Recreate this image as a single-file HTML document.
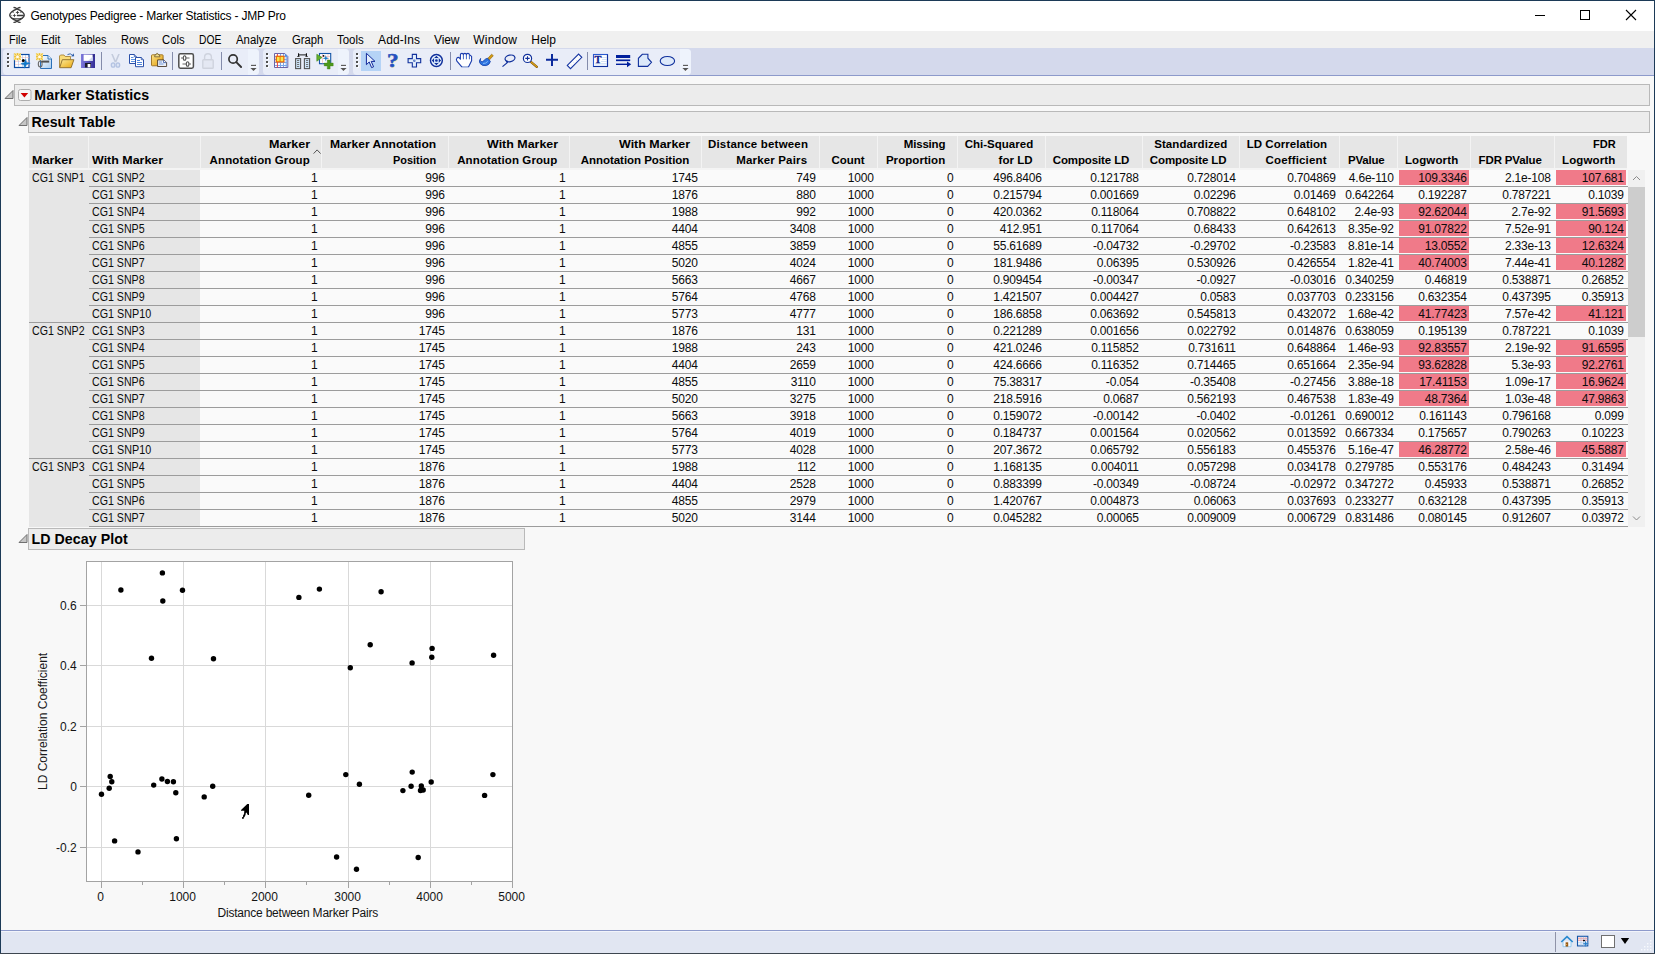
<!DOCTYPE html>
<html><head><meta charset="utf-8"><title>Genotypes Pedigree - Marker Statistics - JMP Pro</title>
<style>
html,body{margin:0;padding:0;background:#1c3a57;}
#w{position:relative;width:1655px;height:954px;overflow:hidden;font-family:"Liberation Sans",sans-serif;}
.r{position:absolute;display:block;}
.t{position:absolute;white-space:pre;}
</style></head>
<body><div id="w">
<div class="r" style="left:0px;top:0px;width:1655px;height:954px;background:#1c3a57;"></div>
<div class="r" style="left:1px;top:1px;width:1653px;height:30px;background:#ffffff;"></div>
<div class="r" style="left:1px;top:31px;width:1653px;height:17px;background:#f0f0f0;"></div>
<div class="r" style="left:1px;top:48px;width:1653px;height:27px;background:#d4d9ec;"></div>
<div class="r" style="left:1px;top:75px;width:1653px;height:1px;background:#8d9acb;"></div>
<div class="r" style="left:1px;top:76px;width:1653px;height:854px;background:#f8f8f8;"></div>
<div class="r" style="left:1px;top:930px;width:1653px;height:1px;background:#8d9acb;"></div>
<div class="r" style="left:1px;top:931px;width:1653px;height:1px;background:#f2f4fa;"></div>
<div class="r" style="left:1px;top:932px;width:1653px;height:21px;background:#e1e6f2;"></div>
<div class="r" style="left:0px;top:953px;width:1655px;height:1px;background:#3d4650;"></div>
<svg class="r" style="left:0;top:0" width="40" height="31" viewBox="0 0 40 31"><g fill="none" stroke="#3a3a3a" stroke-width="1.3" stroke-linecap="round"><path d="M14 7.5q1.8 0 3 1.4q7 3 7.300000000000001 6.199999999999999q-0.3 3.1-7.300000000000001 5.9q-1.2 1.4-3 1.4"/><path d="M20 7.5q-1.8 0-3 1.4q-7 3-7.300000000000001 6.199999999999999q0.3 3.1 7.300000000000001 5.9q1.2 1.4 3 1.4"/><path d="M12 18.3q5 1.3 10 0"/><path d="M17.4 15.5h5.8"/></g><path d="M17.5 10.4L18.1 11.8L19.5 12.4L18.1 13.0L17.5 14.4L16.9 13.0L15.5 12.4L16.9 11.8Z" fill="#3a3a3a"/><path d="M14.4 13.5L15.0 14.9L16.4 15.5L15.0 16.1L14.4 17.5L13.8 16.1L12.4 15.5L13.8 14.9Z" fill="#3a3a3a"/><path d="M11.6 12.6l2.4-1.2v1.2zM22.4 12.6l-2.4-1.2v1.2zM10.4 15.5l1.2-0.5v1z" fill="#3a3a3a"/></svg>
<span class="t" style="left:30.40px;top:8.04px;font-size:12px;line-height:16px;color:#000;letter-spacing:-0.205px;">Genotypes Pedigree - Marker Statistics - JMP Pro</span>
<svg class="r" style="left:1520px;top:1px" width="134" height="30" viewBox="0 0 134 30"><g stroke="#000" stroke-width="1" fill="none"><path d="M15 14.5h10"/><rect x="60.5" y="9.5" width="9" height="9"/><path d="M106 9l10 10M116 9l-10 10" stroke-width="1.1"/></g></svg>
<span class="t" style="left:8.80px;top:31.64px;font-size:12px;line-height:16px;color:#000;transform-origin:0 0;transform:scaleX(0.9051);">File</span>
<span class="t" style="left:40.50px;top:31.64px;font-size:12px;line-height:16px;color:#000;transform-origin:0 0;transform:scaleX(0.9334);">Edit</span>
<span class="t" style="left:74.50px;top:31.64px;font-size:12px;line-height:16px;color:#000;transform-origin:0 0;transform:scaleX(0.9052);">Tables</span>
<span class="t" style="left:120.60px;top:31.64px;font-size:12px;line-height:16px;color:#000;transform-origin:0 0;transform:scaleX(0.9198);">Rows</span>
<span class="t" style="left:162.30px;top:31.64px;font-size:12px;line-height:16px;color:#000;transform-origin:0 0;transform:scaleX(0.9414);">Cols</span>
<span class="t" style="left:199.40px;top:31.64px;font-size:12px;line-height:16px;color:#000;transform-origin:0 0;transform:scaleX(0.8576);">DOE</span>
<span class="t" style="left:236.40px;top:31.64px;font-size:12px;line-height:16px;color:#000;transform-origin:0 0;transform:scaleX(0.9487);">Analyze</span>
<span class="t" style="left:291.50px;top:31.64px;font-size:12px;line-height:16px;color:#000;transform-origin:0 0;transform:scaleX(0.9385);">Graph</span>
<span class="t" style="left:337.40px;top:31.64px;font-size:12px;line-height:16px;color:#000;transform-origin:0 0;transform:scaleX(0.9531);">Tools</span>
<span class="t" style="left:378.10px;top:31.64px;font-size:12px;line-height:16px;color:#000;letter-spacing:0.106px;">Add-Ins</span>
<span class="t" style="left:434.10px;top:31.64px;font-size:12px;line-height:16px;color:#000;letter-spacing:-0.198px;">View</span>
<span class="t" style="left:473.30px;top:31.64px;font-size:12px;line-height:16px;color:#000;letter-spacing:0.187px;">Window</span>
<span class="t" style="left:531.30px;top:31.64px;font-size:12px;line-height:16px;color:#000;letter-spacing:-0.020px;">Help</span>
<div class="r" style="left:3px;top:49px;width:256px;height:26px;background:#e9edf8;border-radius:4px;"></div>
<div class="r" style="left:8px;top:54px;width:2px;height:2px;background:#fbfcff;"></div>
<div class="r" style="left:7px;top:53px;width:2px;height:2px;background:#505050;"></div>
<div class="r" style="left:8px;top:58px;width:2px;height:2px;background:#fbfcff;"></div>
<div class="r" style="left:7px;top:57px;width:2px;height:2px;background:#505050;"></div>
<div class="r" style="left:8px;top:62px;width:2px;height:2px;background:#fbfcff;"></div>
<div class="r" style="left:7px;top:61px;width:2px;height:2px;background:#505050;"></div>
<div class="r" style="left:8px;top:66px;width:2px;height:2px;background:#fbfcff;"></div>
<div class="r" style="left:7px;top:65px;width:2px;height:2px;background:#505050;"></div>
<div class="r" style="left:263px;top:49px;width:86px;height:26px;background:#e9edf8;border-radius:4px;"></div>
<div class="r" style="left:267px;top:54px;width:2px;height:2px;background:#fbfcff;"></div>
<div class="r" style="left:266px;top:53px;width:2px;height:2px;background:#505050;"></div>
<div class="r" style="left:267px;top:58px;width:2px;height:2px;background:#fbfcff;"></div>
<div class="r" style="left:266px;top:57px;width:2px;height:2px;background:#505050;"></div>
<div class="r" style="left:267px;top:62px;width:2px;height:2px;background:#fbfcff;"></div>
<div class="r" style="left:266px;top:61px;width:2px;height:2px;background:#505050;"></div>
<div class="r" style="left:267px;top:66px;width:2px;height:2px;background:#fbfcff;"></div>
<div class="r" style="left:266px;top:65px;width:2px;height:2px;background:#505050;"></div>
<div class="r" style="left:353px;top:49px;width:338px;height:26px;background:#e9edf8;border-radius:4px;"></div>
<div class="r" style="left:357px;top:54px;width:2px;height:2px;background:#fbfcff;"></div>
<div class="r" style="left:356px;top:53px;width:2px;height:2px;background:#505050;"></div>
<div class="r" style="left:357px;top:58px;width:2px;height:2px;background:#fbfcff;"></div>
<div class="r" style="left:356px;top:57px;width:2px;height:2px;background:#505050;"></div>
<div class="r" style="left:357px;top:62px;width:2px;height:2px;background:#fbfcff;"></div>
<div class="r" style="left:356px;top:61px;width:2px;height:2px;background:#505050;"></div>
<div class="r" style="left:357px;top:66px;width:2px;height:2px;background:#fbfcff;"></div>
<div class="r" style="left:356px;top:65px;width:2px;height:2px;background:#505050;"></div>
<div class="r" style="left:248px;top:49px;width:11px;height:26px;background:#eef3fc;border-radius:0 4px 4px 0;"></div>
<div class="r" style="left:338px;top:49px;width:11px;height:26px;background:#eef3fc;border-radius:0 4px 4px 0;"></div>
<div class="r" style="left:680px;top:49px;width:11px;height:26px;background:#eef3fc;border-radius:0 4px 4px 0;"></div>
<svg class="r" style="left:250.0px;top:64px" width="8" height="8" viewBox="0 0 8 8"><path d="M1 1.4h5" stroke="#fafbff" stroke-width="1" fill="none" transform="translate(0.6 0.8)"/><path d="M1 1.4h5" stroke="#555" stroke-width="1.1" fill="none"/><path d="M0.4 4.1h6.2l-3.1 3z" fill="#fafbff" transform="translate(0.6 0.7)"/><path d="M0.4 4.1h6.2l-3.1 3z" fill="#555"/></svg>
<svg class="r" style="left:340.3px;top:64px" width="8" height="8" viewBox="0 0 8 8"><path d="M1 1.4h5" stroke="#fafbff" stroke-width="1" fill="none" transform="translate(0.6 0.8)"/><path d="M1 1.4h5" stroke="#555" stroke-width="1.1" fill="none"/><path d="M0.4 4.1h6.2l-3.1 3z" fill="#fafbff" transform="translate(0.6 0.7)"/><path d="M0.4 4.1h6.2l-3.1 3z" fill="#555"/></svg>
<svg class="r" style="left:681.8px;top:64px" width="8" height="8" viewBox="0 0 8 8"><path d="M1 1.4h5" stroke="#fafbff" stroke-width="1" fill="none" transform="translate(0.6 0.8)"/><path d="M1 1.4h5" stroke="#555" stroke-width="1.1" fill="none"/><path d="M0.4 4.1h6.2l-3.1 3z" fill="#fafbff" transform="translate(0.6 0.7)"/><path d="M0.4 4.1h6.2l-3.1 3z" fill="#555"/></svg>
<div class="r" style="left:101px;top:52px;width:1px;height:18px;background:#848cab;"></div>
<div class="r" style="left:172px;top:52px;width:1px;height:18px;background:#848cab;"></div>
<div class="r" style="left:221px;top:52px;width:1px;height:18px;background:#848cab;"></div>
<div class="r" style="left:450px;top:52px;width:1px;height:18px;background:#848cab;"></div>
<div class="r" style="left:587px;top:52px;width:1px;height:18px;background:#848cab;"></div>
<div class="r" style="left:361px;top:51px;width:20px;height:20px;background:#b5d3f6;"></div>
<svg class="r" style="left:0;top:48px" width="700" height="28" viewBox="0 48 700 28"><rect x="14.5" y="54.5" width="14.5" height="13" fill="#ffffff" stroke="#0c4ca3" stroke-width="1.2"/><path d="M15 57.5h14M15 61.5h14M15 64.5h14" stroke="#f6b0b0" stroke-width="0.5"/><path d="M18.5 55v12M22.5 55v12M25.5 55v12" stroke="#9fc0ea" stroke-width="0.6"/><rect x="14.0" y="53.2" width="7" height="7" fill="#f9e38a"/><path d="M14.3 53.5l6.4 6.4M20.7 53.5l-6.4 6.4M17.5 53.2v7M14.0 56.7h7" stroke="#e3ad22" stroke-width="0.8" fill="none"/><circle cx="17.5" cy="56.7" r="1.5" fill="#fffdf0"/><circle cx="23.3" cy="60.4" r="1.5" fill="#000"/><path d="M25.8 59.3L26.5 62.5L30.2 63.3L26.6 64.5L24.5 68.2L24 64.8L20.8 63.8L24.4 62.6Z" fill="#1178c8" stroke="#1178c8" stroke-width="0.5"/><defs><linearGradient id="gpg" x1="0" y1="0" x2="1" y2="1"><stop offset="0" stop-color="#ffffff"/><stop offset="1" stop-color="#a9cdf0"/></linearGradient></defs><path d="M40.5 55.5h7.5l3.5 3.5v9.5h-11z" fill="url(#gpg)" stroke="#2a70b8" stroke-width="1"/><path d="M48 55.5v3.5h3.5" fill="#e8f2fc" stroke="#2a70b8" stroke-width="0.9"/><rect x="36.0" y="53.2" width="7" height="7" fill="#f9e38a"/><path d="M36.3 53.5l6.4 6.4M42.7 53.5l-6.4 6.4M39.5 53.2v7M36.0 56.7h7" stroke="#e3ad22" stroke-width="0.8" fill="none"/><circle cx="39.5" cy="56.7" r="1.5" fill="#fffdf0"/><ellipse cx="40.2" cy="64" rx="1.9" ry="3" fill="none" stroke="#6a6a6a" stroke-width="1.1"/><path d="M41.4 61.6h7.8" stroke="#505050" stroke-width="2"/><defs><linearGradient id="gfo" x1="0" y1="0" x2="1" y2="1"><stop offset="0" stop-color="#fdeb9a"/><stop offset="1" stop-color="#e9a70e"/></linearGradient></defs><path d="M59.5 67.5v-11.5l1-1h3.5l1.2 1.5h5.3v3" fill="#f9dc7a" stroke="#a8843a" stroke-width="0.9"/><path d="M59.7 67.7l2.6-8h11.6l-2.8 8z" fill="url(#gfo)" stroke="#8a6a2a" stroke-width="0.9"/><path d="M67.5 54.6q3-2 5 0.8" fill="none" stroke="#3a6ab0" stroke-width="1"/><path d="M71.2 56.6l3-0.3l-0.6-3z" fill="#2a5aa8"/><defs><linearGradient id="gsv" x1="0" y1="0" x2="1" y2="0"><stop offset="0" stop-color="#7d78dc"/><stop offset="1" stop-color="#342e96"/></linearGradient></defs><rect x="81" y="54" width="14" height="14" fill="url(#gsv)"/><rect x="83.6" y="54.6" width="9" height="6.3" fill="#ffffff"/><path d="M88 60.9l4.6-4.5v4.5z" fill="#cfd8f0"/><rect x="85" y="63" width="6" height="4.4" fill="#1a1a2a"/><rect x="87.6" y="64" width="2.8" height="3.4" fill="#ffffff"/><rect x="93.3" y="55.5" width="0.9" height="0.9" fill="#1a1a4a"/><path d="M111.2 54l1.6 0l2.7 6.2l2.7-6.2l1.6 0l-3.4 8.2l-1.8 0z" fill="#c3cbdc"/><g fill="#dbe4f4" stroke="#b4c3e2" stroke-width="1.3"><ellipse cx="113.1" cy="65" rx="1.8" ry="2.2"/><ellipse cx="117.9" cy="65" rx="1.8" ry="2.2"/></g><path d="M129.5 54.5h4.8l2.2 2.2v6.8h-7z" fill="#ffffff" stroke="#2a4fa8" stroke-width="1"/><path d="M134.3 54.5v2.2h2.2" fill="#dfe8fa" stroke="#2a4fa8" stroke-width="0.8"/><path d="M131 57.5h2.5M131 59.5h4.5M131 61.5h4.5" stroke="#4a86e0" stroke-width="0.9"/><path d="M135.5 57.5h5.8l2.2 2.2v6.999999999999999h-8z" fill="#ffffff" stroke="#2a4fa8" stroke-width="1"/><path d="M141.3 57.5v2.2h2.2" fill="#dfe8fa" stroke="#2a4fa8" stroke-width="0.8"/><path d="M137 60.5h3M137 62.5h5M137 64.5h5" stroke="#3a76d8" stroke-width="0.9"/><defs><linearGradient id="gpa" x1="0" y1="0" x2="1" y2="1"><stop offset="0" stop-color="#fbe38a"/><stop offset="1" stop-color="#e19a06"/></linearGradient></defs><rect x="151.5" y="54.8" width="11.6" height="11" rx="0.8" fill="url(#gpa)" stroke="#9a6d1c" stroke-width="0.9"/><path d="M154.6 56.8h5.4l-0.8-2.2h-1.1l-0.5-1.2h-0.9l-0.5 1.2h-1z" fill="#f3e08a" stroke="#6d5a34" stroke-width="0.8"/><path d="M157.6 59.9h6.2l2.8 2.6v4h-9z" fill="#e8eef9" stroke="#4a3a2a" stroke-width="0.9"/><path d="M163.6 60v2.6h2.8" fill="#fff" stroke="#2a4a9a" stroke-width="0.8"/><path d="M159 62h3M159 64h4.5" stroke="#6a8fd0" stroke-width="0.9"/><rect x="178.8" y="53.8" width="14.6" height="14.4" rx="1.6" fill="#ffffff" stroke="#4e4e4e" stroke-width="1.5"/><g stroke="#666" stroke-width="1" fill="#fff"><path d="M181 58h8.5M182.5 64h8.5"/><ellipse cx="184.6" cy="58" rx="1.3" ry="2.3" stroke="#555" stroke-width="1.1"/><ellipse cx="187.6" cy="64" rx="1.3" ry="2.3" stroke="#555" stroke-width="1.1"/></g><g fill="none" stroke="#cfd3de" stroke-width="1.4"><path d="M204.6 59.6v-2.4a3.4 3.4 0 0 1 6.8 0v2.4"/><rect x="202.8" y="59.8" width="10.4" height="8.4" rx="0.8" fill="#e4e8f3"/></g><circle cx="233.1" cy="59" r="4.2" fill="none" stroke="#333" stroke-width="1.7"/><path d="M236.3 62.2l4.8 4.8" stroke="#333" stroke-width="1.9" stroke-linecap="round"/><path d="M274.5 53.5h10.3l3 3v11h-13.3z" fill="#ffffff" stroke="#6a64a8" stroke-width="1"/><path d="M275 56.5h12.5M275 59.5h12.5M275 62.5h12.5M275 65.5h12.5M280.5 54v13M283.5 54v13M286.2 56v11" stroke="#79a6ea" stroke-width="1.1"/><path d="M284.8 53.6l2.9 2.9h-2.9z" fill="#4a90e8"/><path d="M277.4 54v13.4" stroke="#f04040" stroke-width="1"/><rect x="276.3" y="56.3" width="7.6" height="5.6" fill="#f5e94a" stroke="#ee6a08" stroke-width="1.3"/><path d="M280.1 56.5v5.2" stroke="#ee6a08" stroke-width="1"/><g fill="#cde3f7" stroke="#555" stroke-width="1.1"><rect x="295.6" y="58.6" width="5" height="10"/><rect x="304.4" y="58.6" width="5.2" height="10"/></g><path d="M297 60.5h2.2M297 62.5h2.2M297 64.5h2.2M297 66.5h2.2M306 60.5h2.2M306 62.5h2.2M306 64.5h2.2M306 66.5h2.2" stroke="#666" stroke-width="0.9"/><path d="M298.4 54.9h8.2" stroke="#000" stroke-width="0.9"/><path d="M298.1 53.2h1v2.6l0.7 0.9h-3l1.3-0.9zM305.9 53.2h1v2.6l1.3 0.9h-3l0.7-0.9z" fill="#000"/><rect x="319.5" y="53.5" width="11.2" height="10.2" fill="#ffffff" stroke="#1556a8" stroke-width="1.1"/><path d="M320 56.5h10M322.5 54v9.5M328 54v9.5" stroke="#f0a0a0" stroke-width="0.5"/><circle cx="323.5" cy="55.8" r="0.9" fill="#000"/><path d="M325.8 55.099999999999994L326.504 57.596L329.0 58.3L326.504 59.004L325.8 61.5L325.096 59.004L322.6 58.3L325.096 57.596Z" fill="#1a78c2"/><path d="M316.8 54.2l5.2 3.4l-5.2 3.6z" fill="#63ae2c" stroke="#3f8a1a" stroke-width="0.6"/><path d="M327.3 60h2.8v3.1h3.1v2.8h-3.1v3.1h-2.8v-3.1h-3.1v-2.8h3.1z" fill="#4e9a1c" stroke="#3c7d12" stroke-width="0.4"/><path d="M366.4 53.3v11.4l2.8-2.7l2.4 5.6l2-0.8l-2.4-5.4h3.8z" fill="#e4eefc" stroke="#10289a" stroke-width="1" stroke-linejoin="miter"/><path d="M412.3 54.4h4.2v4.2h4.2v4.2h-4.2v4.2h-4.2v-4.2h-4.2v-4.2h4.2z" fill="#e2eefc" stroke="#10309c" stroke-width="1.1"/><rect x="413.4" y="59.7" width="1.9" height="1.9" fill="#10309c"/><rect x="413.9" y="60.2" width="0.9" height="0.9" fill="#9cc0f0"/><circle cx="436.4" cy="60.5" r="5.9" fill="#cfe2f9" stroke="#10309c" stroke-width="1.5"/><circle cx="436.4" cy="60.5" r="4.4" fill="none" stroke="#ffffff" stroke-width="0.8"/><g fill="#10309c"><path d="M436.4 55.8l2.2 2.3h-4.4zM436.4 65.2l2.2-2.3h-4.4zM431.7 60.5l2.3-2.2v4.4zM441.1 60.5l-2.3-2.2v4.4z"/><circle cx="436.4" cy="60.5" r="1.3"/></g><path d="M461.6 66.7L456.9 61.2Q455.8 59.4 457 58Q458.3 56.8 459.6 58.2L460.4 59.2V54.6Q460.5 53.4 461.9 53.4Q463.3 53.4 463.4 54.6Q463.5 53.4 464.9 53.4Q466.3 53.4 466.4 54.6Q466.5 53.4 467.9 53.4Q469.3 53.4 469.4 54.8L471.6 56.4V60.8L468.6 66.7Z" fill="#ffffff" stroke="#1a3cae" stroke-width="1.1" stroke-linejoin="round"/><path d="M463.4 54.8V59.3M466.4 54.8V59.3M469.4 55V59.3" stroke="#2a55c0" stroke-width="0.9"/><path d="M462.3 66.6h5.6" stroke="#c6d6e8" stroke-width="0.8"/><path d="M487.6 58.6l4-4.4l1.7 1.5l-4 4.400000000000006z" fill="#d49a12" stroke="#8a6208" stroke-width="0.6"/><path d="M480.6 58.4q-2.2 2.600000000000001-0.6 5q2.2 3 6.2 2.2q3.4-0.8 4.2-4.2l-2.8-3.2q-2.2 0.4-3.800000000000001 2.4q-1.4 1.6-2.8 0.8q-1-0.8-0.4-3z" fill="#2d74e0" stroke="#1640a8" stroke-width="0.8"/><path d="M483 63.4q2.8 0.4 4.8-2" stroke="#8fc0fa" stroke-width="0.9" fill="none"/><g fill="none" stroke="#10309c" stroke-width="1.2"><ellipse cx="510" cy="58.4" rx="5" ry="3.3" transform="rotate(-12 510 58.4)"/><path d="M507.3 60.4q-1.6 1.2 0 2.200000000000003l-4.8 4"/></g><path d="M530.6 61.6l6.2 5.2" stroke="#8a5a08" stroke-width="2.4" stroke-linecap="round"/><path d="M531 61.9l5.6 4.7" stroke="#e0a81a" stroke-width="1.1" stroke-linecap="round"/><circle cx="527.5" cy="58.4" r="4.1" fill="#ffffff" stroke="#10309c" stroke-width="1.2"/><path d="M525.3 58.4h4.4M527.5 56.2v4.4" stroke="#10309c" stroke-width="1.1"/><path d="M546 59.8h12M552 53.9v12" stroke="#0b2a9c" stroke-width="2"/><path d="M567.3 65.4l11.3-11.3l3.2 3.2l-11.3 11.3z" fill="#ffffff" stroke="#1636a2" stroke-width="1.1"/><path d="M571 64.6l1.2 1.2M573.4 62.2l1.2 1.2M575.8 59.8l1.2 1.2M578.2 57.4l1.2 1.2" stroke="#c8d6f2" stroke-width="0.7"/><rect x="593.5" y="54.5" width="14" height="12" fill="#ffffff" stroke="#2a5ad0" stroke-width="1.1"/><path d="M593.5 66.5h14v-12" fill="none" stroke="#10309c" stroke-width="1.1"/><path d="M602 57.5h5M602 59.5h5M601 61.5h6M595 63.5h12M595 65h12" stroke="#c9daf5" stroke-width="0.8"/><text x="594.6" y="62.9" font-family="Liberation Serif, serif" font-weight="bold" font-size="10.4" fill="#10208c" stroke="#10208c" stroke-width="0.3">T</text><path d="M616 56.5h14.2" stroke="#001f9c" stroke-width="3"/><path d="M616 60.3h14.2" stroke="#001f9c" stroke-width="1.7"/><path d="M616 64.3h11.6" stroke="#001f9c" stroke-width="1.4"/><path d="M627 61.4l4.2 2.9l-4.2 2.9z" fill="#001f9c"/><path d="M638.4 66.4v-8.1l3.9-4h5.6v3.9l3.6 4.1l-3.8 4.1z" fill="#dbe8fa" stroke="#10309c" stroke-width="1.1"/><ellipse cx="667.4" cy="61" rx="7.2" ry="4.5" fill="#dde9fa" stroke="#10309c" stroke-width="1.1"/></svg>
<span class="t" style="left:386.6px;top:51.2px;font-family:'Liberation Serif',serif;font-weight:bold;font-size:19px;line-height:20px;color:#2450c0;-webkit-text-stroke:0.5px #2450c0;transform-origin:0 0;transform:scaleX(1.22);text-shadow:0.8px 0.8px 0 #f4e6c0">?</span>
<div class="r" style="left:14px;top:84px;width:1636px;height:22px;background:#ececec;border:1px solid #b9b9b9;box-sizing:border-box;"></div>
<svg class="r" style="left:3.5px;top:89px" width="11" height="11" viewBox="0 0 11 11"><path d="M1 9.5h8v-8z" fill="#c6c6c6" stroke="#707070" stroke-width="1" stroke-linejoin="miter"/></svg>
<svg class="r" style="left:18px;top:89px" width="14" height="13" viewBox="0 0 14 13"><rect x="0.5" y="0.5" width="12.5" height="11" rx="2" fill="#f6f6f6" stroke="#adadad"/><path d="M2.6 4h7.6l-3.8 4.4z" fill="#d10000"/></svg>
<span class="t" style="left:34.30px;top:85.78px;font-size:14.2px;line-height:18px;color:#000;font-weight:bold;letter-spacing:0.085px;">Marker Statistics</span>
<div class="r" style="left:28px;top:111px;width:1622px;height:22px;background:#ececec;border:1px solid #b9b9b9;box-sizing:border-box;"></div>
<svg class="r" style="left:17.5px;top:116px" width="11" height="11" viewBox="0 0 11 11"><path d="M1 9.5h8v-8z" fill="#c6c6c6" stroke="#707070" stroke-width="1" stroke-linejoin="miter"/></svg>
<span class="t" style="left:31.40px;top:112.78px;font-size:14.2px;line-height:18px;color:#000;font-weight:bold;letter-spacing:0.058px;">Result Table</span>
<div class="r" style="left:28px;top:528px;width:497px;height:22px;background:#ececec;border:1px solid #b9b9b9;box-sizing:border-box;"></div>
<svg class="r" style="left:17.5px;top:533px" width="11" height="11" viewBox="0 0 11 11"><path d="M1 9.5h8v-8z" fill="#c6c6c6" stroke="#707070" stroke-width="1" stroke-linejoin="miter"/></svg>
<span class="t" style="left:31.40px;top:529.78px;font-size:14.2px;line-height:18px;color:#000;font-weight:bold;letter-spacing:0.085px;">LD Decay Plot</span>
<div class="r" style="left:29px;top:136px;width:1598px;height:32px;background:#e6e6e6;"></div>
<div class="r" style="left:88px;top:136px;width:1px;height:32px;background:#f3f3f3;"></div>
<div class="r" style="left:200px;top:136px;width:1px;height:32px;background:#f3f3f3;"></div>
<div class="r" style="left:321px;top:136px;width:1px;height:32px;background:#f3f3f3;"></div>
<div class="r" style="left:448px;top:136px;width:1px;height:32px;background:#f3f3f3;"></div>
<div class="r" style="left:569px;top:136px;width:1px;height:32px;background:#f3f3f3;"></div>
<div class="r" style="left:701px;top:136px;width:1px;height:32px;background:#f3f3f3;"></div>
<div class="r" style="left:819px;top:136px;width:1px;height:32px;background:#f3f3f3;"></div>
<div class="r" style="left:877px;top:136px;width:1px;height:32px;background:#f3f3f3;"></div>
<div class="r" style="left:957px;top:136px;width:1px;height:32px;background:#f3f3f3;"></div>
<div class="r" style="left:1045px;top:136px;width:1px;height:32px;background:#f3f3f3;"></div>
<div class="r" style="left:1142px;top:136px;width:1px;height:32px;background:#f3f3f3;"></div>
<div class="r" style="left:1239px;top:136px;width:1px;height:32px;background:#f3f3f3;"></div>
<div class="r" style="left:1339px;top:136px;width:1px;height:32px;background:#f3f3f3;"></div>
<div class="r" style="left:1397px;top:136px;width:1px;height:32px;background:#f3f3f3;"></div>
<div class="r" style="left:1470px;top:136px;width:1px;height:32px;background:#f3f3f3;"></div>
<div class="r" style="left:1554px;top:136px;width:1px;height:32px;background:#f3f3f3;"></div>
<div class="r" style="left:29px;top:168px;width:1598px;height:2px;background:#f4f4f4;"></div>
<div class="r" style="left:29px;top:170px;width:171px;height:357px;background:#e6e6e6;"></div>
<div class="r" style="left:200px;top:170px;width:1428px;height:357px;background:#fafafa;"></div>
<span class="t" style="left:32.40px;top:153.02px;font-size:11.5px;line-height:15px;color:#000;font-weight:bold;transform-origin:0 0;transform:scaleX(1.0897);">Marker</span>
<span class="t" style="left:92.40px;top:153.02px;font-size:11.5px;line-height:15px;color:#000;font-weight:bold;transform-origin:0 0;transform:scaleX(1.0819);">With Marker</span>
<span class="t" style="left:268.80px;top:137.02px;font-size:11.5px;line-height:15px;color:#000;font-weight:bold;transform-origin:0 0;transform:scaleX(1.0897);">Marker</span>
<span class="t" style="left:209.60px;top:153.02px;font-size:11.5px;line-height:15px;color:#000;font-weight:bold;letter-spacing:0.115px;">Annotation Group</span>
<span class="t" style="left:329.70px;top:137.02px;font-size:11.5px;line-height:15px;color:#000;font-weight:bold;transform-origin:0 0;transform:scaleX(1.0493);">Marker Annotation</span>
<span class="t" style="left:393.20px;top:153.02px;font-size:11.5px;line-height:15px;color:#000;font-weight:bold;transform-origin:0 0;transform:scaleX(0.9502);">Position</span>
<span class="t" style="left:486.80px;top:137.02px;font-size:11.5px;line-height:15px;color:#000;font-weight:bold;transform-origin:0 0;transform:scaleX(1.0819);">With Marker</span>
<span class="t" style="left:457.20px;top:153.02px;font-size:11.5px;line-height:15px;color:#000;font-weight:bold;letter-spacing:0.115px;">Annotation Group</span>
<span class="t" style="left:618.70px;top:137.02px;font-size:11.5px;line-height:15px;color:#000;font-weight:bold;transform-origin:0 0;transform:scaleX(1.0819);">With Marker</span>
<span class="t" style="left:580.70px;top:153.02px;font-size:11.5px;line-height:15px;color:#000;font-weight:bold;letter-spacing:-0.033px;">Annotation Position</span>
<span class="t" style="left:707.90px;top:137.02px;font-size:11.5px;line-height:15px;color:#000;font-weight:bold;letter-spacing:0.197px;">Distance between</span>
<span class="t" style="left:736.30px;top:153.02px;font-size:11.5px;line-height:15px;color:#000;font-weight:bold;letter-spacing:0.155px;">Marker Pairs</span>
<span class="t" style="left:831.40px;top:153.02px;font-size:11.5px;line-height:15px;color:#000;font-weight:bold;letter-spacing:0.018px;">Count</span>
<span class="t" style="left:903.80px;top:137.02px;font-size:11.5px;line-height:15px;color:#000;font-weight:bold;letter-spacing:-0.187px;">Missing</span>
<span class="t" style="left:885.90px;top:153.02px;font-size:11.5px;line-height:15px;color:#000;font-weight:bold;letter-spacing:0.063px;">Proportion</span>
<span class="t" style="left:964.70px;top:137.02px;font-size:11.5px;line-height:15px;color:#000;font-weight:bold;letter-spacing:0.012px;">Chi-Squared</span>
<span class="t" style="left:998.50px;top:153.02px;font-size:11.5px;line-height:15px;color:#000;font-weight:bold;letter-spacing:0.058px;">for LD</span>
<span class="t" style="left:1052.70px;top:153.02px;font-size:11.5px;line-height:15px;color:#000;font-weight:bold;letter-spacing:-0.112px;">Composite LD</span>
<span class="t" style="left:1154.20px;top:137.02px;font-size:11.5px;line-height:15px;color:#000;font-weight:bold;letter-spacing:0.083px;">Standardized</span>
<span class="t" style="left:1149.80px;top:153.02px;font-size:11.5px;line-height:15px;color:#000;font-weight:bold;letter-spacing:-0.112px;">Composite LD</span>
<span class="t" style="left:1246.70px;top:137.02px;font-size:11.5px;line-height:15px;color:#000;font-weight:bold;letter-spacing:0.045px;">LD Correlation</span>
<span class="t" style="left:1265.50px;top:153.02px;font-size:11.5px;line-height:15px;color:#000;font-weight:bold;letter-spacing:0.162px;">Coefficient</span>
<span class="t" style="left:1347.90px;top:153.02px;font-size:11.5px;line-height:15px;color:#000;font-weight:bold;letter-spacing:-0.170px;">PValue</span>
<span class="t" style="left:1404.90px;top:153.02px;font-size:11.5px;line-height:15px;color:#000;font-weight:bold;letter-spacing:0.128px;">Logworth</span>
<span class="t" style="left:1478.60px;top:153.02px;font-size:11.5px;line-height:15px;color:#000;font-weight:bold;letter-spacing:-0.145px;">FDR PValue</span>
<span class="t" style="left:1592.70px;top:137.02px;font-size:11.5px;line-height:15px;color:#000;font-weight:bold;transform-origin:0 0;transform:scaleX(0.9605);">FDR</span>
<span class="t" style="left:1562.00px;top:153.02px;font-size:11.5px;line-height:15px;color:#000;font-weight:bold;letter-spacing:0.128px;">Logworth</span>
<svg class="r" style="left:313px;top:148px" width="9" height="7" viewBox="0 0 9 7"><path d="M0.6 5.6l3.5-3.7l3.5 3.7" fill="none" stroke="#555" stroke-width="1"/></svg>
<div class="r" style="left:89px;top:186px;width:1539px;height:1px;background:#9c9c9c;"></div>
<span class="t" style="left:32.20px;top:169.64px;font-size:12px;line-height:16px;color:#0c0c0c;transform-origin:0 0;transform:scaleX(0.8862);">CG1 SNP1</span>
<span class="t" style="left:92.20px;top:169.64px;font-size:12px;line-height:16px;color:#0c0c0c;transform-origin:0 0;transform:scaleX(0.8862);">CG1 SNP2</span>
<div class="r" style="left:1399px;top:170px;width:70px;height:15px;background:#f07a89;"></div>
<div class="r" style="left:1556px;top:170px;width:70px;height:15px;background:#f07a89;"></div>
<span class="t" style="left:311.03px;top:169.64px;font-size:12px;line-height:16px;color:#0c0c0c;">1</span>
<span class="t" style="left:425.28px;top:169.64px;font-size:12px;line-height:16px;color:#0c0c0c;letter-spacing:-0.200px;">996</span>
<span class="t" style="left:559.03px;top:169.64px;font-size:12px;line-height:16px;color:#0c0c0c;">1</span>
<span class="t" style="left:671.80px;top:169.64px;font-size:12px;line-height:16px;color:#0c0c0c;letter-spacing:-0.200px;">1745</span>
<span class="t" style="left:796.28px;top:169.64px;font-size:12px;line-height:16px;color:#0c0c0c;letter-spacing:-0.200px;">749</span>
<span class="t" style="left:847.80px;top:169.64px;font-size:12px;line-height:16px;color:#0c0c0c;letter-spacing:-0.200px;">1000</span>
<span class="t" style="left:947.03px;top:169.64px;font-size:12px;line-height:16px;color:#0c0c0c;">0</span>
<span class="t" style="left:993.25px;top:169.64px;font-size:12px;line-height:16px;color:#0c0c0c;letter-spacing:-0.200px;">496.8406</span>
<span class="t" style="left:1090.25px;top:169.64px;font-size:12px;line-height:16px;color:#0c0c0c;letter-spacing:-0.200px;">0.121788</span>
<span class="t" style="left:1187.25px;top:169.64px;font-size:12px;line-height:16px;color:#0c0c0c;letter-spacing:-0.200px;">0.728014</span>
<span class="t" style="left:1287.25px;top:169.64px;font-size:12px;line-height:16px;color:#0c0c0c;letter-spacing:-0.200px;">0.704869</span>
<span class="t" style="left:1348.82px;top:169.64px;font-size:12px;line-height:16px;color:#0c0c0c;letter-spacing:-0.200px;">4.6e-110</span>
<span class="t" style="left:1418.25px;top:169.64px;font-size:12px;line-height:16px;color:#0c0c0c;letter-spacing:-0.200px;">109.3346</span>
<span class="t" style="left:1504.93px;top:169.64px;font-size:12px;line-height:16px;color:#0c0c0c;letter-spacing:-0.200px;">2.1e-108</span>
<span class="t" style="left:1581.72px;top:169.64px;font-size:12px;line-height:16px;color:#0c0c0c;letter-spacing:-0.200px;">107.681</span>
<div class="r" style="left:89px;top:203px;width:1539px;height:1px;background:#9c9c9c;"></div>
<span class="t" style="left:92.20px;top:186.64px;font-size:12px;line-height:16px;color:#0c0c0c;transform-origin:0 0;transform:scaleX(0.8862);">CG1 SNP3</span>
<span class="t" style="left:311.03px;top:186.64px;font-size:12px;line-height:16px;color:#0c0c0c;">1</span>
<span class="t" style="left:425.28px;top:186.64px;font-size:12px;line-height:16px;color:#0c0c0c;letter-spacing:-0.200px;">996</span>
<span class="t" style="left:559.03px;top:186.64px;font-size:12px;line-height:16px;color:#0c0c0c;">1</span>
<span class="t" style="left:671.80px;top:186.64px;font-size:12px;line-height:16px;color:#0c0c0c;letter-spacing:-0.200px;">1876</span>
<span class="t" style="left:796.28px;top:186.64px;font-size:12px;line-height:16px;color:#0c0c0c;letter-spacing:-0.200px;">880</span>
<span class="t" style="left:847.80px;top:186.64px;font-size:12px;line-height:16px;color:#0c0c0c;letter-spacing:-0.200px;">1000</span>
<span class="t" style="left:947.03px;top:186.64px;font-size:12px;line-height:16px;color:#0c0c0c;">0</span>
<span class="t" style="left:993.25px;top:186.64px;font-size:12px;line-height:16px;color:#0c0c0c;letter-spacing:-0.200px;">0.215794</span>
<span class="t" style="left:1090.25px;top:186.64px;font-size:12px;line-height:16px;color:#0c0c0c;letter-spacing:-0.200px;">0.001669</span>
<span class="t" style="left:1193.72px;top:186.64px;font-size:12px;line-height:16px;color:#0c0c0c;letter-spacing:-0.200px;">0.02296</span>
<span class="t" style="left:1293.72px;top:186.64px;font-size:12px;line-height:16px;color:#0c0c0c;letter-spacing:-0.200px;">0.01469</span>
<span class="t" style="left:1345.25px;top:186.64px;font-size:12px;line-height:16px;color:#0c0c0c;letter-spacing:-0.200px;">0.642264</span>
<span class="t" style="left:1418.25px;top:186.64px;font-size:12px;line-height:16px;color:#0c0c0c;letter-spacing:-0.200px;">0.192287</span>
<span class="t" style="left:1502.25px;top:186.64px;font-size:12px;line-height:16px;color:#0c0c0c;letter-spacing:-0.200px;">0.787221</span>
<span class="t" style="left:1588.20px;top:186.64px;font-size:12px;line-height:16px;color:#0c0c0c;letter-spacing:-0.200px;">0.1039</span>
<div class="r" style="left:89px;top:220px;width:1539px;height:1px;background:#9c9c9c;"></div>
<span class="t" style="left:92.20px;top:203.64px;font-size:12px;line-height:16px;color:#0c0c0c;transform-origin:0 0;transform:scaleX(0.8862);">CG1 SNP4</span>
<div class="r" style="left:1399px;top:204px;width:70px;height:15px;background:#f07a89;"></div>
<div class="r" style="left:1556px;top:204px;width:70px;height:15px;background:#f07a89;"></div>
<span class="t" style="left:311.03px;top:203.64px;font-size:12px;line-height:16px;color:#0c0c0c;">1</span>
<span class="t" style="left:425.28px;top:203.64px;font-size:12px;line-height:16px;color:#0c0c0c;letter-spacing:-0.200px;">996</span>
<span class="t" style="left:559.03px;top:203.64px;font-size:12px;line-height:16px;color:#0c0c0c;">1</span>
<span class="t" style="left:671.80px;top:203.64px;font-size:12px;line-height:16px;color:#0c0c0c;letter-spacing:-0.200px;">1988</span>
<span class="t" style="left:796.28px;top:203.64px;font-size:12px;line-height:16px;color:#0c0c0c;letter-spacing:-0.200px;">992</span>
<span class="t" style="left:847.80px;top:203.64px;font-size:12px;line-height:16px;color:#0c0c0c;letter-spacing:-0.200px;">1000</span>
<span class="t" style="left:947.03px;top:203.64px;font-size:12px;line-height:16px;color:#0c0c0c;">0</span>
<span class="t" style="left:993.25px;top:203.64px;font-size:12px;line-height:16px;color:#0c0c0c;letter-spacing:-0.200px;">420.0362</span>
<span class="t" style="left:1091.14px;top:203.64px;font-size:12px;line-height:16px;color:#0c0c0c;letter-spacing:-0.200px;">0.118064</span>
<span class="t" style="left:1187.25px;top:203.64px;font-size:12px;line-height:16px;color:#0c0c0c;letter-spacing:-0.200px;">0.708822</span>
<span class="t" style="left:1287.25px;top:203.64px;font-size:12px;line-height:16px;color:#0c0c0c;letter-spacing:-0.200px;">0.648102</span>
<span class="t" style="left:1354.40px;top:203.64px;font-size:12px;line-height:16px;color:#0c0c0c;letter-spacing:-0.200px;">2.4e-93</span>
<span class="t" style="left:1418.25px;top:203.64px;font-size:12px;line-height:16px;color:#0c0c0c;letter-spacing:-0.200px;">92.62044</span>
<span class="t" style="left:1511.40px;top:203.64px;font-size:12px;line-height:16px;color:#0c0c0c;letter-spacing:-0.200px;">2.7e-92</span>
<span class="t" style="left:1581.72px;top:203.64px;font-size:12px;line-height:16px;color:#0c0c0c;letter-spacing:-0.200px;">91.5693</span>
<div class="r" style="left:89px;top:237px;width:1539px;height:1px;background:#9c9c9c;"></div>
<span class="t" style="left:92.20px;top:220.64px;font-size:12px;line-height:16px;color:#0c0c0c;transform-origin:0 0;transform:scaleX(0.8862);">CG1 SNP5</span>
<div class="r" style="left:1399px;top:221px;width:70px;height:15px;background:#f07a89;"></div>
<div class="r" style="left:1556px;top:221px;width:70px;height:15px;background:#f07a89;"></div>
<span class="t" style="left:311.03px;top:220.64px;font-size:12px;line-height:16px;color:#0c0c0c;">1</span>
<span class="t" style="left:425.28px;top:220.64px;font-size:12px;line-height:16px;color:#0c0c0c;letter-spacing:-0.200px;">996</span>
<span class="t" style="left:559.03px;top:220.64px;font-size:12px;line-height:16px;color:#0c0c0c;">1</span>
<span class="t" style="left:671.80px;top:220.64px;font-size:12px;line-height:16px;color:#0c0c0c;letter-spacing:-0.200px;">4404</span>
<span class="t" style="left:789.80px;top:220.64px;font-size:12px;line-height:16px;color:#0c0c0c;letter-spacing:-0.200px;">3408</span>
<span class="t" style="left:847.80px;top:220.64px;font-size:12px;line-height:16px;color:#0c0c0c;letter-spacing:-0.200px;">1000</span>
<span class="t" style="left:947.03px;top:220.64px;font-size:12px;line-height:16px;color:#0c0c0c;">0</span>
<span class="t" style="left:999.72px;top:220.64px;font-size:12px;line-height:16px;color:#0c0c0c;letter-spacing:-0.200px;">412.951</span>
<span class="t" style="left:1091.14px;top:220.64px;font-size:12px;line-height:16px;color:#0c0c0c;letter-spacing:-0.200px;">0.117064</span>
<span class="t" style="left:1193.72px;top:220.64px;font-size:12px;line-height:16px;color:#0c0c0c;letter-spacing:-0.200px;">0.68433</span>
<span class="t" style="left:1287.25px;top:220.64px;font-size:12px;line-height:16px;color:#0c0c0c;letter-spacing:-0.200px;">0.642613</span>
<span class="t" style="left:1347.93px;top:220.64px;font-size:12px;line-height:16px;color:#0c0c0c;letter-spacing:-0.200px;">8.35e-92</span>
<span class="t" style="left:1418.25px;top:220.64px;font-size:12px;line-height:16px;color:#0c0c0c;letter-spacing:-0.200px;">91.07822</span>
<span class="t" style="left:1504.93px;top:220.64px;font-size:12px;line-height:16px;color:#0c0c0c;letter-spacing:-0.200px;">7.52e-91</span>
<span class="t" style="left:1588.20px;top:220.64px;font-size:12px;line-height:16px;color:#0c0c0c;letter-spacing:-0.200px;">90.124</span>
<div class="r" style="left:89px;top:254px;width:1539px;height:1px;background:#9c9c9c;"></div>
<span class="t" style="left:92.20px;top:237.64px;font-size:12px;line-height:16px;color:#0c0c0c;transform-origin:0 0;transform:scaleX(0.8862);">CG1 SNP6</span>
<div class="r" style="left:1399px;top:238px;width:70px;height:15px;background:#f07a89;"></div>
<div class="r" style="left:1556px;top:238px;width:70px;height:15px;background:#f07a89;"></div>
<span class="t" style="left:311.03px;top:237.64px;font-size:12px;line-height:16px;color:#0c0c0c;">1</span>
<span class="t" style="left:425.28px;top:237.64px;font-size:12px;line-height:16px;color:#0c0c0c;letter-spacing:-0.200px;">996</span>
<span class="t" style="left:559.03px;top:237.64px;font-size:12px;line-height:16px;color:#0c0c0c;">1</span>
<span class="t" style="left:671.80px;top:237.64px;font-size:12px;line-height:16px;color:#0c0c0c;letter-spacing:-0.200px;">4855</span>
<span class="t" style="left:789.80px;top:237.64px;font-size:12px;line-height:16px;color:#0c0c0c;letter-spacing:-0.200px;">3859</span>
<span class="t" style="left:847.80px;top:237.64px;font-size:12px;line-height:16px;color:#0c0c0c;letter-spacing:-0.200px;">1000</span>
<span class="t" style="left:947.03px;top:237.64px;font-size:12px;line-height:16px;color:#0c0c0c;">0</span>
<span class="t" style="left:993.25px;top:237.64px;font-size:12px;line-height:16px;color:#0c0c0c;letter-spacing:-0.200px;">55.61689</span>
<span class="t" style="left:1092.93px;top:237.64px;font-size:12px;line-height:16px;color:#0c0c0c;letter-spacing:-0.200px;">-0.04732</span>
<span class="t" style="left:1189.93px;top:237.64px;font-size:12px;line-height:16px;color:#0c0c0c;letter-spacing:-0.200px;">-0.29702</span>
<span class="t" style="left:1289.93px;top:237.64px;font-size:12px;line-height:16px;color:#0c0c0c;letter-spacing:-0.200px;">-0.23583</span>
<span class="t" style="left:1347.93px;top:237.64px;font-size:12px;line-height:16px;color:#0c0c0c;letter-spacing:-0.200px;">8.81e-14</span>
<span class="t" style="left:1424.72px;top:237.64px;font-size:12px;line-height:16px;color:#0c0c0c;letter-spacing:-0.200px;">13.0552</span>
<span class="t" style="left:1504.93px;top:237.64px;font-size:12px;line-height:16px;color:#0c0c0c;letter-spacing:-0.200px;">2.33e-13</span>
<span class="t" style="left:1581.72px;top:237.64px;font-size:12px;line-height:16px;color:#0c0c0c;letter-spacing:-0.200px;">12.6324</span>
<div class="r" style="left:89px;top:271px;width:1539px;height:1px;background:#9c9c9c;"></div>
<span class="t" style="left:92.20px;top:254.64px;font-size:12px;line-height:16px;color:#0c0c0c;transform-origin:0 0;transform:scaleX(0.8862);">CG1 SNP7</span>
<div class="r" style="left:1399px;top:255px;width:70px;height:15px;background:#f07a89;"></div>
<div class="r" style="left:1556px;top:255px;width:70px;height:15px;background:#f07a89;"></div>
<span class="t" style="left:311.03px;top:254.64px;font-size:12px;line-height:16px;color:#0c0c0c;">1</span>
<span class="t" style="left:425.28px;top:254.64px;font-size:12px;line-height:16px;color:#0c0c0c;letter-spacing:-0.200px;">996</span>
<span class="t" style="left:559.03px;top:254.64px;font-size:12px;line-height:16px;color:#0c0c0c;">1</span>
<span class="t" style="left:671.80px;top:254.64px;font-size:12px;line-height:16px;color:#0c0c0c;letter-spacing:-0.200px;">5020</span>
<span class="t" style="left:789.80px;top:254.64px;font-size:12px;line-height:16px;color:#0c0c0c;letter-spacing:-0.200px;">4024</span>
<span class="t" style="left:847.80px;top:254.64px;font-size:12px;line-height:16px;color:#0c0c0c;letter-spacing:-0.200px;">1000</span>
<span class="t" style="left:947.03px;top:254.64px;font-size:12px;line-height:16px;color:#0c0c0c;">0</span>
<span class="t" style="left:993.25px;top:254.64px;font-size:12px;line-height:16px;color:#0c0c0c;letter-spacing:-0.200px;">181.9486</span>
<span class="t" style="left:1096.72px;top:254.64px;font-size:12px;line-height:16px;color:#0c0c0c;letter-spacing:-0.200px;">0.06395</span>
<span class="t" style="left:1187.25px;top:254.64px;font-size:12px;line-height:16px;color:#0c0c0c;letter-spacing:-0.200px;">0.530926</span>
<span class="t" style="left:1287.25px;top:254.64px;font-size:12px;line-height:16px;color:#0c0c0c;letter-spacing:-0.200px;">0.426554</span>
<span class="t" style="left:1347.93px;top:254.64px;font-size:12px;line-height:16px;color:#0c0c0c;letter-spacing:-0.200px;">1.82e-41</span>
<span class="t" style="left:1418.25px;top:254.64px;font-size:12px;line-height:16px;color:#0c0c0c;letter-spacing:-0.200px;">40.74003</span>
<span class="t" style="left:1504.93px;top:254.64px;font-size:12px;line-height:16px;color:#0c0c0c;letter-spacing:-0.200px;">7.44e-41</span>
<span class="t" style="left:1581.72px;top:254.64px;font-size:12px;line-height:16px;color:#0c0c0c;letter-spacing:-0.200px;">40.1282</span>
<div class="r" style="left:89px;top:288px;width:1539px;height:1px;background:#9c9c9c;"></div>
<span class="t" style="left:92.20px;top:271.64px;font-size:12px;line-height:16px;color:#0c0c0c;transform-origin:0 0;transform:scaleX(0.8862);">CG1 SNP8</span>
<span class="t" style="left:311.03px;top:271.64px;font-size:12px;line-height:16px;color:#0c0c0c;">1</span>
<span class="t" style="left:425.28px;top:271.64px;font-size:12px;line-height:16px;color:#0c0c0c;letter-spacing:-0.200px;">996</span>
<span class="t" style="left:559.03px;top:271.64px;font-size:12px;line-height:16px;color:#0c0c0c;">1</span>
<span class="t" style="left:671.80px;top:271.64px;font-size:12px;line-height:16px;color:#0c0c0c;letter-spacing:-0.200px;">5663</span>
<span class="t" style="left:789.80px;top:271.64px;font-size:12px;line-height:16px;color:#0c0c0c;letter-spacing:-0.200px;">4667</span>
<span class="t" style="left:847.80px;top:271.64px;font-size:12px;line-height:16px;color:#0c0c0c;letter-spacing:-0.200px;">1000</span>
<span class="t" style="left:947.03px;top:271.64px;font-size:12px;line-height:16px;color:#0c0c0c;">0</span>
<span class="t" style="left:993.25px;top:271.64px;font-size:12px;line-height:16px;color:#0c0c0c;letter-spacing:-0.200px;">0.909454</span>
<span class="t" style="left:1092.93px;top:271.64px;font-size:12px;line-height:16px;color:#0c0c0c;letter-spacing:-0.200px;">-0.00347</span>
<span class="t" style="left:1196.40px;top:271.64px;font-size:12px;line-height:16px;color:#0c0c0c;letter-spacing:-0.200px;">-0.0927</span>
<span class="t" style="left:1289.93px;top:271.64px;font-size:12px;line-height:16px;color:#0c0c0c;letter-spacing:-0.200px;">-0.03016</span>
<span class="t" style="left:1345.25px;top:271.64px;font-size:12px;line-height:16px;color:#0c0c0c;letter-spacing:-0.200px;">0.340259</span>
<span class="t" style="left:1424.72px;top:271.64px;font-size:12px;line-height:16px;color:#0c0c0c;letter-spacing:-0.200px;">0.46819</span>
<span class="t" style="left:1502.25px;top:271.64px;font-size:12px;line-height:16px;color:#0c0c0c;letter-spacing:-0.200px;">0.538871</span>
<span class="t" style="left:1581.72px;top:271.64px;font-size:12px;line-height:16px;color:#0c0c0c;letter-spacing:-0.200px;">0.26852</span>
<div class="r" style="left:89px;top:305px;width:1539px;height:1px;background:#9c9c9c;"></div>
<span class="t" style="left:92.20px;top:288.64px;font-size:12px;line-height:16px;color:#0c0c0c;transform-origin:0 0;transform:scaleX(0.8862);">CG1 SNP9</span>
<span class="t" style="left:311.03px;top:288.64px;font-size:12px;line-height:16px;color:#0c0c0c;">1</span>
<span class="t" style="left:425.28px;top:288.64px;font-size:12px;line-height:16px;color:#0c0c0c;letter-spacing:-0.200px;">996</span>
<span class="t" style="left:559.03px;top:288.64px;font-size:12px;line-height:16px;color:#0c0c0c;">1</span>
<span class="t" style="left:671.80px;top:288.64px;font-size:12px;line-height:16px;color:#0c0c0c;letter-spacing:-0.200px;">5764</span>
<span class="t" style="left:789.80px;top:288.64px;font-size:12px;line-height:16px;color:#0c0c0c;letter-spacing:-0.200px;">4768</span>
<span class="t" style="left:847.80px;top:288.64px;font-size:12px;line-height:16px;color:#0c0c0c;letter-spacing:-0.200px;">1000</span>
<span class="t" style="left:947.03px;top:288.64px;font-size:12px;line-height:16px;color:#0c0c0c;">0</span>
<span class="t" style="left:993.25px;top:288.64px;font-size:12px;line-height:16px;color:#0c0c0c;letter-spacing:-0.200px;">1.421507</span>
<span class="t" style="left:1090.25px;top:288.64px;font-size:12px;line-height:16px;color:#0c0c0c;letter-spacing:-0.200px;">0.004427</span>
<span class="t" style="left:1200.20px;top:288.64px;font-size:12px;line-height:16px;color:#0c0c0c;letter-spacing:-0.200px;">0.0583</span>
<span class="t" style="left:1287.25px;top:288.64px;font-size:12px;line-height:16px;color:#0c0c0c;letter-spacing:-0.200px;">0.037703</span>
<span class="t" style="left:1345.25px;top:288.64px;font-size:12px;line-height:16px;color:#0c0c0c;letter-spacing:-0.200px;">0.233156</span>
<span class="t" style="left:1418.25px;top:288.64px;font-size:12px;line-height:16px;color:#0c0c0c;letter-spacing:-0.200px;">0.632354</span>
<span class="t" style="left:1502.25px;top:288.64px;font-size:12px;line-height:16px;color:#0c0c0c;letter-spacing:-0.200px;">0.437395</span>
<span class="t" style="left:1581.72px;top:288.64px;font-size:12px;line-height:16px;color:#0c0c0c;letter-spacing:-0.200px;">0.35913</span>
<div class="r" style="left:29px;top:322px;width:1599px;height:1px;background:#9c9c9c;"></div>
<span class="t" style="left:92.20px;top:305.64px;font-size:12px;line-height:16px;color:#0c0c0c;transform-origin:0 0;transform:scaleX(0.8951);">CG1 SNP10</span>
<div class="r" style="left:1399px;top:306px;width:70px;height:15px;background:#f07a89;"></div>
<div class="r" style="left:1556px;top:306px;width:70px;height:15px;background:#f07a89;"></div>
<span class="t" style="left:311.03px;top:305.64px;font-size:12px;line-height:16px;color:#0c0c0c;">1</span>
<span class="t" style="left:425.28px;top:305.64px;font-size:12px;line-height:16px;color:#0c0c0c;letter-spacing:-0.200px;">996</span>
<span class="t" style="left:559.03px;top:305.64px;font-size:12px;line-height:16px;color:#0c0c0c;">1</span>
<span class="t" style="left:671.80px;top:305.64px;font-size:12px;line-height:16px;color:#0c0c0c;letter-spacing:-0.200px;">5773</span>
<span class="t" style="left:789.80px;top:305.64px;font-size:12px;line-height:16px;color:#0c0c0c;letter-spacing:-0.200px;">4777</span>
<span class="t" style="left:847.80px;top:305.64px;font-size:12px;line-height:16px;color:#0c0c0c;letter-spacing:-0.200px;">1000</span>
<span class="t" style="left:947.03px;top:305.64px;font-size:12px;line-height:16px;color:#0c0c0c;">0</span>
<span class="t" style="left:993.25px;top:305.64px;font-size:12px;line-height:16px;color:#0c0c0c;letter-spacing:-0.200px;">186.6858</span>
<span class="t" style="left:1090.25px;top:305.64px;font-size:12px;line-height:16px;color:#0c0c0c;letter-spacing:-0.200px;">0.063692</span>
<span class="t" style="left:1187.25px;top:305.64px;font-size:12px;line-height:16px;color:#0c0c0c;letter-spacing:-0.200px;">0.545813</span>
<span class="t" style="left:1287.25px;top:305.64px;font-size:12px;line-height:16px;color:#0c0c0c;letter-spacing:-0.200px;">0.432072</span>
<span class="t" style="left:1347.93px;top:305.64px;font-size:12px;line-height:16px;color:#0c0c0c;letter-spacing:-0.200px;">1.68e-42</span>
<span class="t" style="left:1418.25px;top:305.64px;font-size:12px;line-height:16px;color:#0c0c0c;letter-spacing:-0.200px;">41.77423</span>
<span class="t" style="left:1504.93px;top:305.64px;font-size:12px;line-height:16px;color:#0c0c0c;letter-spacing:-0.200px;">7.57e-42</span>
<span class="t" style="left:1588.20px;top:305.64px;font-size:12px;line-height:16px;color:#0c0c0c;letter-spacing:-0.200px;">41.121</span>
<div class="r" style="left:89px;top:339px;width:1539px;height:1px;background:#9c9c9c;"></div>
<span class="t" style="left:32.20px;top:322.64px;font-size:12px;line-height:16px;color:#0c0c0c;transform-origin:0 0;transform:scaleX(0.8862);">CG1 SNP2</span>
<span class="t" style="left:92.20px;top:322.64px;font-size:12px;line-height:16px;color:#0c0c0c;transform-origin:0 0;transform:scaleX(0.8862);">CG1 SNP3</span>
<span class="t" style="left:311.03px;top:322.64px;font-size:12px;line-height:16px;color:#0c0c0c;">1</span>
<span class="t" style="left:418.80px;top:322.64px;font-size:12px;line-height:16px;color:#0c0c0c;letter-spacing:-0.200px;">1745</span>
<span class="t" style="left:559.03px;top:322.64px;font-size:12px;line-height:16px;color:#0c0c0c;">1</span>
<span class="t" style="left:671.80px;top:322.64px;font-size:12px;line-height:16px;color:#0c0c0c;letter-spacing:-0.200px;">1876</span>
<span class="t" style="left:796.28px;top:322.64px;font-size:12px;line-height:16px;color:#0c0c0c;letter-spacing:-0.200px;">131</span>
<span class="t" style="left:847.80px;top:322.64px;font-size:12px;line-height:16px;color:#0c0c0c;letter-spacing:-0.200px;">1000</span>
<span class="t" style="left:947.03px;top:322.64px;font-size:12px;line-height:16px;color:#0c0c0c;">0</span>
<span class="t" style="left:993.25px;top:322.64px;font-size:12px;line-height:16px;color:#0c0c0c;letter-spacing:-0.200px;">0.221289</span>
<span class="t" style="left:1090.25px;top:322.64px;font-size:12px;line-height:16px;color:#0c0c0c;letter-spacing:-0.200px;">0.001656</span>
<span class="t" style="left:1187.25px;top:322.64px;font-size:12px;line-height:16px;color:#0c0c0c;letter-spacing:-0.200px;">0.022792</span>
<span class="t" style="left:1287.25px;top:322.64px;font-size:12px;line-height:16px;color:#0c0c0c;letter-spacing:-0.200px;">0.014876</span>
<span class="t" style="left:1345.25px;top:322.64px;font-size:12px;line-height:16px;color:#0c0c0c;letter-spacing:-0.200px;">0.638059</span>
<span class="t" style="left:1418.25px;top:322.64px;font-size:12px;line-height:16px;color:#0c0c0c;letter-spacing:-0.200px;">0.195139</span>
<span class="t" style="left:1502.25px;top:322.64px;font-size:12px;line-height:16px;color:#0c0c0c;letter-spacing:-0.200px;">0.787221</span>
<span class="t" style="left:1588.20px;top:322.64px;font-size:12px;line-height:16px;color:#0c0c0c;letter-spacing:-0.200px;">0.1039</span>
<div class="r" style="left:89px;top:356px;width:1539px;height:1px;background:#9c9c9c;"></div>
<span class="t" style="left:92.20px;top:339.64px;font-size:12px;line-height:16px;color:#0c0c0c;transform-origin:0 0;transform:scaleX(0.8862);">CG1 SNP4</span>
<div class="r" style="left:1399px;top:340px;width:70px;height:15px;background:#f07a89;"></div>
<div class="r" style="left:1556px;top:340px;width:70px;height:15px;background:#f07a89;"></div>
<span class="t" style="left:311.03px;top:339.64px;font-size:12px;line-height:16px;color:#0c0c0c;">1</span>
<span class="t" style="left:418.80px;top:339.64px;font-size:12px;line-height:16px;color:#0c0c0c;letter-spacing:-0.200px;">1745</span>
<span class="t" style="left:559.03px;top:339.64px;font-size:12px;line-height:16px;color:#0c0c0c;">1</span>
<span class="t" style="left:671.80px;top:339.64px;font-size:12px;line-height:16px;color:#0c0c0c;letter-spacing:-0.200px;">1988</span>
<span class="t" style="left:796.28px;top:339.64px;font-size:12px;line-height:16px;color:#0c0c0c;letter-spacing:-0.200px;">243</span>
<span class="t" style="left:847.80px;top:339.64px;font-size:12px;line-height:16px;color:#0c0c0c;letter-spacing:-0.200px;">1000</span>
<span class="t" style="left:947.03px;top:339.64px;font-size:12px;line-height:16px;color:#0c0c0c;">0</span>
<span class="t" style="left:993.25px;top:339.64px;font-size:12px;line-height:16px;color:#0c0c0c;letter-spacing:-0.200px;">421.0246</span>
<span class="t" style="left:1091.14px;top:339.64px;font-size:12px;line-height:16px;color:#0c0c0c;letter-spacing:-0.200px;">0.115852</span>
<span class="t" style="left:1188.14px;top:339.64px;font-size:12px;line-height:16px;color:#0c0c0c;letter-spacing:-0.200px;">0.731611</span>
<span class="t" style="left:1287.25px;top:339.64px;font-size:12px;line-height:16px;color:#0c0c0c;letter-spacing:-0.200px;">0.648864</span>
<span class="t" style="left:1347.93px;top:339.64px;font-size:12px;line-height:16px;color:#0c0c0c;letter-spacing:-0.200px;">1.46e-93</span>
<span class="t" style="left:1418.25px;top:339.64px;font-size:12px;line-height:16px;color:#0c0c0c;letter-spacing:-0.200px;">92.83557</span>
<span class="t" style="left:1504.93px;top:339.64px;font-size:12px;line-height:16px;color:#0c0c0c;letter-spacing:-0.200px;">2.19e-92</span>
<span class="t" style="left:1581.72px;top:339.64px;font-size:12px;line-height:16px;color:#0c0c0c;letter-spacing:-0.200px;">91.6595</span>
<div class="r" style="left:89px;top:373px;width:1539px;height:1px;background:#9c9c9c;"></div>
<span class="t" style="left:92.20px;top:356.64px;font-size:12px;line-height:16px;color:#0c0c0c;transform-origin:0 0;transform:scaleX(0.8862);">CG1 SNP5</span>
<div class="r" style="left:1399px;top:357px;width:70px;height:15px;background:#f07a89;"></div>
<div class="r" style="left:1556px;top:357px;width:70px;height:15px;background:#f07a89;"></div>
<span class="t" style="left:311.03px;top:356.64px;font-size:12px;line-height:16px;color:#0c0c0c;">1</span>
<span class="t" style="left:418.80px;top:356.64px;font-size:12px;line-height:16px;color:#0c0c0c;letter-spacing:-0.200px;">1745</span>
<span class="t" style="left:559.03px;top:356.64px;font-size:12px;line-height:16px;color:#0c0c0c;">1</span>
<span class="t" style="left:671.80px;top:356.64px;font-size:12px;line-height:16px;color:#0c0c0c;letter-spacing:-0.200px;">4404</span>
<span class="t" style="left:789.80px;top:356.64px;font-size:12px;line-height:16px;color:#0c0c0c;letter-spacing:-0.200px;">2659</span>
<span class="t" style="left:847.80px;top:356.64px;font-size:12px;line-height:16px;color:#0c0c0c;letter-spacing:-0.200px;">1000</span>
<span class="t" style="left:947.03px;top:356.64px;font-size:12px;line-height:16px;color:#0c0c0c;">0</span>
<span class="t" style="left:993.25px;top:356.64px;font-size:12px;line-height:16px;color:#0c0c0c;letter-spacing:-0.200px;">424.6666</span>
<span class="t" style="left:1091.14px;top:356.64px;font-size:12px;line-height:16px;color:#0c0c0c;letter-spacing:-0.200px;">0.116352</span>
<span class="t" style="left:1187.25px;top:356.64px;font-size:12px;line-height:16px;color:#0c0c0c;letter-spacing:-0.200px;">0.714465</span>
<span class="t" style="left:1287.25px;top:356.64px;font-size:12px;line-height:16px;color:#0c0c0c;letter-spacing:-0.200px;">0.651664</span>
<span class="t" style="left:1347.93px;top:356.64px;font-size:12px;line-height:16px;color:#0c0c0c;letter-spacing:-0.200px;">2.35e-94</span>
<span class="t" style="left:1418.25px;top:356.64px;font-size:12px;line-height:16px;color:#0c0c0c;letter-spacing:-0.200px;">93.62828</span>
<span class="t" style="left:1511.40px;top:356.64px;font-size:12px;line-height:16px;color:#0c0c0c;letter-spacing:-0.200px;">5.3e-93</span>
<span class="t" style="left:1581.72px;top:356.64px;font-size:12px;line-height:16px;color:#0c0c0c;letter-spacing:-0.200px;">92.2761</span>
<div class="r" style="left:89px;top:390px;width:1539px;height:1px;background:#9c9c9c;"></div>
<span class="t" style="left:92.20px;top:373.64px;font-size:12px;line-height:16px;color:#0c0c0c;transform-origin:0 0;transform:scaleX(0.8862);">CG1 SNP6</span>
<div class="r" style="left:1399px;top:374px;width:70px;height:15px;background:#f07a89;"></div>
<div class="r" style="left:1556px;top:374px;width:70px;height:15px;background:#f07a89;"></div>
<span class="t" style="left:311.03px;top:373.64px;font-size:12px;line-height:16px;color:#0c0c0c;">1</span>
<span class="t" style="left:418.80px;top:373.64px;font-size:12px;line-height:16px;color:#0c0c0c;letter-spacing:-0.200px;">1745</span>
<span class="t" style="left:559.03px;top:373.64px;font-size:12px;line-height:16px;color:#0c0c0c;">1</span>
<span class="t" style="left:671.80px;top:373.64px;font-size:12px;line-height:16px;color:#0c0c0c;letter-spacing:-0.200px;">4855</span>
<span class="t" style="left:790.70px;top:373.64px;font-size:12px;line-height:16px;color:#0c0c0c;letter-spacing:-0.200px;">3110</span>
<span class="t" style="left:847.80px;top:373.64px;font-size:12px;line-height:16px;color:#0c0c0c;letter-spacing:-0.200px;">1000</span>
<span class="t" style="left:947.03px;top:373.64px;font-size:12px;line-height:16px;color:#0c0c0c;">0</span>
<span class="t" style="left:993.25px;top:373.64px;font-size:12px;line-height:16px;color:#0c0c0c;letter-spacing:-0.200px;">75.38317</span>
<span class="t" style="left:1105.87px;top:373.64px;font-size:12px;line-height:16px;color:#0c0c0c;letter-spacing:-0.200px;">-0.054</span>
<span class="t" style="left:1189.93px;top:373.64px;font-size:12px;line-height:16px;color:#0c0c0c;letter-spacing:-0.200px;">-0.35408</span>
<span class="t" style="left:1289.93px;top:373.64px;font-size:12px;line-height:16px;color:#0c0c0c;letter-spacing:-0.200px;">-0.27456</span>
<span class="t" style="left:1347.93px;top:373.64px;font-size:12px;line-height:16px;color:#0c0c0c;letter-spacing:-0.200px;">3.88e-18</span>
<span class="t" style="left:1419.14px;top:373.64px;font-size:12px;line-height:16px;color:#0c0c0c;letter-spacing:-0.200px;">17.41153</span>
<span class="t" style="left:1504.93px;top:373.64px;font-size:12px;line-height:16px;color:#0c0c0c;letter-spacing:-0.200px;">1.09e-17</span>
<span class="t" style="left:1581.72px;top:373.64px;font-size:12px;line-height:16px;color:#0c0c0c;letter-spacing:-0.200px;">16.9624</span>
<div class="r" style="left:89px;top:407px;width:1539px;height:1px;background:#9c9c9c;"></div>
<span class="t" style="left:92.20px;top:390.64px;font-size:12px;line-height:16px;color:#0c0c0c;transform-origin:0 0;transform:scaleX(0.8862);">CG1 SNP7</span>
<div class="r" style="left:1399px;top:391px;width:70px;height:15px;background:#f07a89;"></div>
<div class="r" style="left:1556px;top:391px;width:70px;height:15px;background:#f07a89;"></div>
<span class="t" style="left:311.03px;top:390.64px;font-size:12px;line-height:16px;color:#0c0c0c;">1</span>
<span class="t" style="left:418.80px;top:390.64px;font-size:12px;line-height:16px;color:#0c0c0c;letter-spacing:-0.200px;">1745</span>
<span class="t" style="left:559.03px;top:390.64px;font-size:12px;line-height:16px;color:#0c0c0c;">1</span>
<span class="t" style="left:671.80px;top:390.64px;font-size:12px;line-height:16px;color:#0c0c0c;letter-spacing:-0.200px;">5020</span>
<span class="t" style="left:789.80px;top:390.64px;font-size:12px;line-height:16px;color:#0c0c0c;letter-spacing:-0.200px;">3275</span>
<span class="t" style="left:847.80px;top:390.64px;font-size:12px;line-height:16px;color:#0c0c0c;letter-spacing:-0.200px;">1000</span>
<span class="t" style="left:947.03px;top:390.64px;font-size:12px;line-height:16px;color:#0c0c0c;">0</span>
<span class="t" style="left:993.25px;top:390.64px;font-size:12px;line-height:16px;color:#0c0c0c;letter-spacing:-0.200px;">218.5916</span>
<span class="t" style="left:1103.20px;top:390.64px;font-size:12px;line-height:16px;color:#0c0c0c;letter-spacing:-0.200px;">0.0687</span>
<span class="t" style="left:1187.25px;top:390.64px;font-size:12px;line-height:16px;color:#0c0c0c;letter-spacing:-0.200px;">0.562193</span>
<span class="t" style="left:1287.25px;top:390.64px;font-size:12px;line-height:16px;color:#0c0c0c;letter-spacing:-0.200px;">0.467538</span>
<span class="t" style="left:1347.93px;top:390.64px;font-size:12px;line-height:16px;color:#0c0c0c;letter-spacing:-0.200px;">1.83e-49</span>
<span class="t" style="left:1424.72px;top:390.64px;font-size:12px;line-height:16px;color:#0c0c0c;letter-spacing:-0.200px;">48.7364</span>
<span class="t" style="left:1504.93px;top:390.64px;font-size:12px;line-height:16px;color:#0c0c0c;letter-spacing:-0.200px;">1.03e-48</span>
<span class="t" style="left:1581.72px;top:390.64px;font-size:12px;line-height:16px;color:#0c0c0c;letter-spacing:-0.200px;">47.9863</span>
<div class="r" style="left:89px;top:424px;width:1539px;height:1px;background:#9c9c9c;"></div>
<span class="t" style="left:92.20px;top:407.64px;font-size:12px;line-height:16px;color:#0c0c0c;transform-origin:0 0;transform:scaleX(0.8862);">CG1 SNP8</span>
<span class="t" style="left:311.03px;top:407.64px;font-size:12px;line-height:16px;color:#0c0c0c;">1</span>
<span class="t" style="left:418.80px;top:407.64px;font-size:12px;line-height:16px;color:#0c0c0c;letter-spacing:-0.200px;">1745</span>
<span class="t" style="left:559.03px;top:407.64px;font-size:12px;line-height:16px;color:#0c0c0c;">1</span>
<span class="t" style="left:671.80px;top:407.64px;font-size:12px;line-height:16px;color:#0c0c0c;letter-spacing:-0.200px;">5663</span>
<span class="t" style="left:789.80px;top:407.64px;font-size:12px;line-height:16px;color:#0c0c0c;letter-spacing:-0.200px;">3918</span>
<span class="t" style="left:847.80px;top:407.64px;font-size:12px;line-height:16px;color:#0c0c0c;letter-spacing:-0.200px;">1000</span>
<span class="t" style="left:947.03px;top:407.64px;font-size:12px;line-height:16px;color:#0c0c0c;">0</span>
<span class="t" style="left:993.25px;top:407.64px;font-size:12px;line-height:16px;color:#0c0c0c;letter-spacing:-0.200px;">0.159072</span>
<span class="t" style="left:1092.93px;top:407.64px;font-size:12px;line-height:16px;color:#0c0c0c;letter-spacing:-0.200px;">-0.00142</span>
<span class="t" style="left:1196.40px;top:407.64px;font-size:12px;line-height:16px;color:#0c0c0c;letter-spacing:-0.200px;">-0.0402</span>
<span class="t" style="left:1289.93px;top:407.64px;font-size:12px;line-height:16px;color:#0c0c0c;letter-spacing:-0.200px;">-0.01261</span>
<span class="t" style="left:1345.25px;top:407.64px;font-size:12px;line-height:16px;color:#0c0c0c;letter-spacing:-0.200px;">0.690012</span>
<span class="t" style="left:1419.14px;top:407.64px;font-size:12px;line-height:16px;color:#0c0c0c;letter-spacing:-0.200px;">0.161143</span>
<span class="t" style="left:1502.25px;top:407.64px;font-size:12px;line-height:16px;color:#0c0c0c;letter-spacing:-0.200px;">0.796168</span>
<span class="t" style="left:1594.67px;top:407.64px;font-size:12px;line-height:16px;color:#0c0c0c;letter-spacing:-0.200px;">0.099</span>
<div class="r" style="left:89px;top:441px;width:1539px;height:1px;background:#9c9c9c;"></div>
<span class="t" style="left:92.20px;top:424.64px;font-size:12px;line-height:16px;color:#0c0c0c;transform-origin:0 0;transform:scaleX(0.8862);">CG1 SNP9</span>
<span class="t" style="left:311.03px;top:424.64px;font-size:12px;line-height:16px;color:#0c0c0c;">1</span>
<span class="t" style="left:418.80px;top:424.64px;font-size:12px;line-height:16px;color:#0c0c0c;letter-spacing:-0.200px;">1745</span>
<span class="t" style="left:559.03px;top:424.64px;font-size:12px;line-height:16px;color:#0c0c0c;">1</span>
<span class="t" style="left:671.80px;top:424.64px;font-size:12px;line-height:16px;color:#0c0c0c;letter-spacing:-0.200px;">5764</span>
<span class="t" style="left:789.80px;top:424.64px;font-size:12px;line-height:16px;color:#0c0c0c;letter-spacing:-0.200px;">4019</span>
<span class="t" style="left:847.80px;top:424.64px;font-size:12px;line-height:16px;color:#0c0c0c;letter-spacing:-0.200px;">1000</span>
<span class="t" style="left:947.03px;top:424.64px;font-size:12px;line-height:16px;color:#0c0c0c;">0</span>
<span class="t" style="left:993.25px;top:424.64px;font-size:12px;line-height:16px;color:#0c0c0c;letter-spacing:-0.200px;">0.184737</span>
<span class="t" style="left:1090.25px;top:424.64px;font-size:12px;line-height:16px;color:#0c0c0c;letter-spacing:-0.200px;">0.001564</span>
<span class="t" style="left:1187.25px;top:424.64px;font-size:12px;line-height:16px;color:#0c0c0c;letter-spacing:-0.200px;">0.020562</span>
<span class="t" style="left:1287.25px;top:424.64px;font-size:12px;line-height:16px;color:#0c0c0c;letter-spacing:-0.200px;">0.013592</span>
<span class="t" style="left:1345.25px;top:424.64px;font-size:12px;line-height:16px;color:#0c0c0c;letter-spacing:-0.200px;">0.667334</span>
<span class="t" style="left:1418.25px;top:424.64px;font-size:12px;line-height:16px;color:#0c0c0c;letter-spacing:-0.200px;">0.175657</span>
<span class="t" style="left:1502.25px;top:424.64px;font-size:12px;line-height:16px;color:#0c0c0c;letter-spacing:-0.200px;">0.790263</span>
<span class="t" style="left:1581.72px;top:424.64px;font-size:12px;line-height:16px;color:#0c0c0c;letter-spacing:-0.200px;">0.10223</span>
<div class="r" style="left:29px;top:458px;width:1599px;height:1px;background:#9c9c9c;"></div>
<span class="t" style="left:92.20px;top:441.64px;font-size:12px;line-height:16px;color:#0c0c0c;transform-origin:0 0;transform:scaleX(0.8951);">CG1 SNP10</span>
<div class="r" style="left:1399px;top:442px;width:70px;height:15px;background:#f07a89;"></div>
<div class="r" style="left:1556px;top:442px;width:70px;height:15px;background:#f07a89;"></div>
<span class="t" style="left:311.03px;top:441.64px;font-size:12px;line-height:16px;color:#0c0c0c;">1</span>
<span class="t" style="left:418.80px;top:441.64px;font-size:12px;line-height:16px;color:#0c0c0c;letter-spacing:-0.200px;">1745</span>
<span class="t" style="left:559.03px;top:441.64px;font-size:12px;line-height:16px;color:#0c0c0c;">1</span>
<span class="t" style="left:671.80px;top:441.64px;font-size:12px;line-height:16px;color:#0c0c0c;letter-spacing:-0.200px;">5773</span>
<span class="t" style="left:789.80px;top:441.64px;font-size:12px;line-height:16px;color:#0c0c0c;letter-spacing:-0.200px;">4028</span>
<span class="t" style="left:847.80px;top:441.64px;font-size:12px;line-height:16px;color:#0c0c0c;letter-spacing:-0.200px;">1000</span>
<span class="t" style="left:947.03px;top:441.64px;font-size:12px;line-height:16px;color:#0c0c0c;">0</span>
<span class="t" style="left:993.25px;top:441.64px;font-size:12px;line-height:16px;color:#0c0c0c;letter-spacing:-0.200px;">207.3672</span>
<span class="t" style="left:1090.25px;top:441.64px;font-size:12px;line-height:16px;color:#0c0c0c;letter-spacing:-0.200px;">0.065792</span>
<span class="t" style="left:1187.25px;top:441.64px;font-size:12px;line-height:16px;color:#0c0c0c;letter-spacing:-0.200px;">0.556183</span>
<span class="t" style="left:1287.25px;top:441.64px;font-size:12px;line-height:16px;color:#0c0c0c;letter-spacing:-0.200px;">0.455376</span>
<span class="t" style="left:1347.93px;top:441.64px;font-size:12px;line-height:16px;color:#0c0c0c;letter-spacing:-0.200px;">5.16e-47</span>
<span class="t" style="left:1418.25px;top:441.64px;font-size:12px;line-height:16px;color:#0c0c0c;letter-spacing:-0.200px;">46.28772</span>
<span class="t" style="left:1504.93px;top:441.64px;font-size:12px;line-height:16px;color:#0c0c0c;letter-spacing:-0.200px;">2.58e-46</span>
<span class="t" style="left:1581.72px;top:441.64px;font-size:12px;line-height:16px;color:#0c0c0c;letter-spacing:-0.200px;">45.5887</span>
<div class="r" style="left:89px;top:475px;width:1539px;height:1px;background:#9c9c9c;"></div>
<span class="t" style="left:32.20px;top:458.64px;font-size:12px;line-height:16px;color:#0c0c0c;transform-origin:0 0;transform:scaleX(0.8862);">CG1 SNP3</span>
<span class="t" style="left:92.20px;top:458.64px;font-size:12px;line-height:16px;color:#0c0c0c;transform-origin:0 0;transform:scaleX(0.8862);">CG1 SNP4</span>
<span class="t" style="left:311.03px;top:458.64px;font-size:12px;line-height:16px;color:#0c0c0c;">1</span>
<span class="t" style="left:418.80px;top:458.64px;font-size:12px;line-height:16px;color:#0c0c0c;letter-spacing:-0.200px;">1876</span>
<span class="t" style="left:559.03px;top:458.64px;font-size:12px;line-height:16px;color:#0c0c0c;">1</span>
<span class="t" style="left:671.80px;top:458.64px;font-size:12px;line-height:16px;color:#0c0c0c;letter-spacing:-0.200px;">1988</span>
<span class="t" style="left:797.17px;top:458.64px;font-size:12px;line-height:16px;color:#0c0c0c;letter-spacing:-0.200px;">112</span>
<span class="t" style="left:847.80px;top:458.64px;font-size:12px;line-height:16px;color:#0c0c0c;letter-spacing:-0.200px;">1000</span>
<span class="t" style="left:947.03px;top:458.64px;font-size:12px;line-height:16px;color:#0c0c0c;">0</span>
<span class="t" style="left:993.25px;top:458.64px;font-size:12px;line-height:16px;color:#0c0c0c;letter-spacing:-0.200px;">1.168135</span>
<span class="t" style="left:1091.14px;top:458.64px;font-size:12px;line-height:16px;color:#0c0c0c;letter-spacing:-0.200px;">0.004011</span>
<span class="t" style="left:1187.25px;top:458.64px;font-size:12px;line-height:16px;color:#0c0c0c;letter-spacing:-0.200px;">0.057298</span>
<span class="t" style="left:1287.25px;top:458.64px;font-size:12px;line-height:16px;color:#0c0c0c;letter-spacing:-0.200px;">0.034178</span>
<span class="t" style="left:1345.25px;top:458.64px;font-size:12px;line-height:16px;color:#0c0c0c;letter-spacing:-0.200px;">0.279785</span>
<span class="t" style="left:1418.25px;top:458.64px;font-size:12px;line-height:16px;color:#0c0c0c;letter-spacing:-0.200px;">0.553176</span>
<span class="t" style="left:1502.25px;top:458.64px;font-size:12px;line-height:16px;color:#0c0c0c;letter-spacing:-0.200px;">0.484243</span>
<span class="t" style="left:1581.72px;top:458.64px;font-size:12px;line-height:16px;color:#0c0c0c;letter-spacing:-0.200px;">0.31494</span>
<div class="r" style="left:89px;top:492px;width:1539px;height:1px;background:#9c9c9c;"></div>
<span class="t" style="left:92.20px;top:475.64px;font-size:12px;line-height:16px;color:#0c0c0c;transform-origin:0 0;transform:scaleX(0.8862);">CG1 SNP5</span>
<span class="t" style="left:311.03px;top:475.64px;font-size:12px;line-height:16px;color:#0c0c0c;">1</span>
<span class="t" style="left:418.80px;top:475.64px;font-size:12px;line-height:16px;color:#0c0c0c;letter-spacing:-0.200px;">1876</span>
<span class="t" style="left:559.03px;top:475.64px;font-size:12px;line-height:16px;color:#0c0c0c;">1</span>
<span class="t" style="left:671.80px;top:475.64px;font-size:12px;line-height:16px;color:#0c0c0c;letter-spacing:-0.200px;">4404</span>
<span class="t" style="left:789.80px;top:475.64px;font-size:12px;line-height:16px;color:#0c0c0c;letter-spacing:-0.200px;">2528</span>
<span class="t" style="left:847.80px;top:475.64px;font-size:12px;line-height:16px;color:#0c0c0c;letter-spacing:-0.200px;">1000</span>
<span class="t" style="left:947.03px;top:475.64px;font-size:12px;line-height:16px;color:#0c0c0c;">0</span>
<span class="t" style="left:993.25px;top:475.64px;font-size:12px;line-height:16px;color:#0c0c0c;letter-spacing:-0.200px;">0.883399</span>
<span class="t" style="left:1092.93px;top:475.64px;font-size:12px;line-height:16px;color:#0c0c0c;letter-spacing:-0.200px;">-0.00349</span>
<span class="t" style="left:1189.93px;top:475.64px;font-size:12px;line-height:16px;color:#0c0c0c;letter-spacing:-0.200px;">-0.08724</span>
<span class="t" style="left:1289.93px;top:475.64px;font-size:12px;line-height:16px;color:#0c0c0c;letter-spacing:-0.200px;">-0.02972</span>
<span class="t" style="left:1345.25px;top:475.64px;font-size:12px;line-height:16px;color:#0c0c0c;letter-spacing:-0.200px;">0.347272</span>
<span class="t" style="left:1424.72px;top:475.64px;font-size:12px;line-height:16px;color:#0c0c0c;letter-spacing:-0.200px;">0.45933</span>
<span class="t" style="left:1502.25px;top:475.64px;font-size:12px;line-height:16px;color:#0c0c0c;letter-spacing:-0.200px;">0.538871</span>
<span class="t" style="left:1581.72px;top:475.64px;font-size:12px;line-height:16px;color:#0c0c0c;letter-spacing:-0.200px;">0.26852</span>
<div class="r" style="left:89px;top:509px;width:1539px;height:1px;background:#9c9c9c;"></div>
<span class="t" style="left:92.20px;top:492.64px;font-size:12px;line-height:16px;color:#0c0c0c;transform-origin:0 0;transform:scaleX(0.8862);">CG1 SNP6</span>
<span class="t" style="left:311.03px;top:492.64px;font-size:12px;line-height:16px;color:#0c0c0c;">1</span>
<span class="t" style="left:418.80px;top:492.64px;font-size:12px;line-height:16px;color:#0c0c0c;letter-spacing:-0.200px;">1876</span>
<span class="t" style="left:559.03px;top:492.64px;font-size:12px;line-height:16px;color:#0c0c0c;">1</span>
<span class="t" style="left:671.80px;top:492.64px;font-size:12px;line-height:16px;color:#0c0c0c;letter-spacing:-0.200px;">4855</span>
<span class="t" style="left:789.80px;top:492.64px;font-size:12px;line-height:16px;color:#0c0c0c;letter-spacing:-0.200px;">2979</span>
<span class="t" style="left:847.80px;top:492.64px;font-size:12px;line-height:16px;color:#0c0c0c;letter-spacing:-0.200px;">1000</span>
<span class="t" style="left:947.03px;top:492.64px;font-size:12px;line-height:16px;color:#0c0c0c;">0</span>
<span class="t" style="left:993.25px;top:492.64px;font-size:12px;line-height:16px;color:#0c0c0c;letter-spacing:-0.200px;">1.420767</span>
<span class="t" style="left:1090.25px;top:492.64px;font-size:12px;line-height:16px;color:#0c0c0c;letter-spacing:-0.200px;">0.004873</span>
<span class="t" style="left:1193.72px;top:492.64px;font-size:12px;line-height:16px;color:#0c0c0c;letter-spacing:-0.200px;">0.06063</span>
<span class="t" style="left:1287.25px;top:492.64px;font-size:12px;line-height:16px;color:#0c0c0c;letter-spacing:-0.200px;">0.037693</span>
<span class="t" style="left:1345.25px;top:492.64px;font-size:12px;line-height:16px;color:#0c0c0c;letter-spacing:-0.200px;">0.233277</span>
<span class="t" style="left:1418.25px;top:492.64px;font-size:12px;line-height:16px;color:#0c0c0c;letter-spacing:-0.200px;">0.632128</span>
<span class="t" style="left:1502.25px;top:492.64px;font-size:12px;line-height:16px;color:#0c0c0c;letter-spacing:-0.200px;">0.437395</span>
<span class="t" style="left:1581.72px;top:492.64px;font-size:12px;line-height:16px;color:#0c0c0c;letter-spacing:-0.200px;">0.35913</span>
<div class="r" style="left:89px;top:526px;width:1539px;height:1px;background:#9c9c9c;"></div>
<span class="t" style="left:92.20px;top:509.64px;font-size:12px;line-height:16px;color:#0c0c0c;transform-origin:0 0;transform:scaleX(0.8862);">CG1 SNP7</span>
<span class="t" style="left:311.03px;top:509.64px;font-size:12px;line-height:16px;color:#0c0c0c;">1</span>
<span class="t" style="left:418.80px;top:509.64px;font-size:12px;line-height:16px;color:#0c0c0c;letter-spacing:-0.200px;">1876</span>
<span class="t" style="left:559.03px;top:509.64px;font-size:12px;line-height:16px;color:#0c0c0c;">1</span>
<span class="t" style="left:671.80px;top:509.64px;font-size:12px;line-height:16px;color:#0c0c0c;letter-spacing:-0.200px;">5020</span>
<span class="t" style="left:789.80px;top:509.64px;font-size:12px;line-height:16px;color:#0c0c0c;letter-spacing:-0.200px;">3144</span>
<span class="t" style="left:847.80px;top:509.64px;font-size:12px;line-height:16px;color:#0c0c0c;letter-spacing:-0.200px;">1000</span>
<span class="t" style="left:947.03px;top:509.64px;font-size:12px;line-height:16px;color:#0c0c0c;">0</span>
<span class="t" style="left:993.25px;top:509.64px;font-size:12px;line-height:16px;color:#0c0c0c;letter-spacing:-0.200px;">0.045282</span>
<span class="t" style="left:1096.72px;top:509.64px;font-size:12px;line-height:16px;color:#0c0c0c;letter-spacing:-0.200px;">0.00065</span>
<span class="t" style="left:1187.25px;top:509.64px;font-size:12px;line-height:16px;color:#0c0c0c;letter-spacing:-0.200px;">0.009009</span>
<span class="t" style="left:1287.25px;top:509.64px;font-size:12px;line-height:16px;color:#0c0c0c;letter-spacing:-0.200px;">0.006729</span>
<span class="t" style="left:1345.25px;top:509.64px;font-size:12px;line-height:16px;color:#0c0c0c;letter-spacing:-0.200px;">0.831486</span>
<span class="t" style="left:1418.25px;top:509.64px;font-size:12px;line-height:16px;color:#0c0c0c;letter-spacing:-0.200px;">0.080145</span>
<span class="t" style="left:1502.25px;top:509.64px;font-size:12px;line-height:16px;color:#0c0c0c;letter-spacing:-0.200px;">0.912607</span>
<span class="t" style="left:1581.72px;top:509.64px;font-size:12px;line-height:16px;color:#0c0c0c;letter-spacing:-0.200px;">0.03972</span>
<div class="r" style="left:1628px;top:170px;width:17px;height:357px;background:#f0f0f0;"></div>
<div class="r" style="left:1628px;top:187px;width:17px;height:150px;background:#cdcdcd;"></div>
<svg class="r" style="left:1628px;top:170px" width="17" height="17" viewBox="0 0 17 17"><path d="M5 10l3.5-3.5l3.5 3.5" fill="none" stroke="#8a8a8a" stroke-width="1"/></svg>
<svg class="r" style="left:1628px;top:510px" width="17" height="17" viewBox="0 0 17 17"><path d="M5 6.5l3.5 3.5l3.5-3.5" fill="none" stroke="#8a8a8a" stroke-width="1"/></svg>
<div class="r" style="left:86px;top:561px;width:427px;height:321px;background:#ffffff;"></div>
<div class="r" style="left:101px;top:561px;width:1px;height:320px;background:#d9d9d9;"></div>
<div class="r" style="left:183px;top:561px;width:1px;height:320px;background:#d9d9d9;"></div>
<div class="r" style="left:265px;top:561px;width:1px;height:320px;background:#d9d9d9;"></div>
<div class="r" style="left:348px;top:561px;width:1px;height:320px;background:#d9d9d9;"></div>
<div class="r" style="left:430px;top:561px;width:1px;height:320px;background:#d9d9d9;"></div>
<div class="r" style="left:86px;top:605px;width:426px;height:1px;background:#d9d9d9;"></div>
<div class="r" style="left:86px;top:665px;width:426px;height:1px;background:#d9d9d9;"></div>
<div class="r" style="left:86px;top:726px;width:426px;height:1px;background:#d9d9d9;"></div>
<div class="r" style="left:86px;top:786px;width:426px;height:1px;background:#d9d9d9;"></div>
<div class="r" style="left:86px;top:847px;width:426px;height:1px;background:#d9d9d9;"></div>
<div class="r" style="left:86px;top:561px;width:427px;height:321px;background:transparent;border:1px solid #a3a3a3;box-sizing:border-box;"></div>
<div class="r" style="left:101px;top:882px;width:1px;height:6px;background:#a3a3a3;"></div>
<span class="t" style="left:97.26px;top:889.14px;font-size:12px;line-height:16px;color:#141414;">0</span>
<div class="r" style="left:183px;top:882px;width:1px;height:6px;background:#a3a3a3;"></div>
<span class="t" style="left:169.25px;top:889.14px;font-size:12px;line-height:16px;color:#141414;">1000</span>
<div class="r" style="left:265px;top:882px;width:1px;height:6px;background:#a3a3a3;"></div>
<span class="t" style="left:251.25px;top:889.14px;font-size:12px;line-height:16px;color:#141414;">2000</span>
<div class="r" style="left:348px;top:882px;width:1px;height:6px;background:#a3a3a3;"></div>
<span class="t" style="left:334.25px;top:889.14px;font-size:12px;line-height:16px;color:#141414;">3000</span>
<div class="r" style="left:430px;top:882px;width:1px;height:6px;background:#a3a3a3;"></div>
<span class="t" style="left:416.25px;top:889.14px;font-size:12px;line-height:16px;color:#141414;">4000</span>
<div class="r" style="left:512px;top:882px;width:1px;height:6px;background:#a3a3a3;"></div>
<span class="t" style="left:498.25px;top:889.14px;font-size:12px;line-height:16px;color:#141414;">5000</span>
<div class="r" style="left:142px;top:882px;width:1px;height:3px;background:#a3a3a3;"></div>
<div class="r" style="left:224px;top:882px;width:1px;height:3px;background:#a3a3a3;"></div>
<div class="r" style="left:306px;top:882px;width:1px;height:3px;background:#a3a3a3;"></div>
<div class="r" style="left:389px;top:882px;width:1px;height:3px;background:#a3a3a3;"></div>
<div class="r" style="left:471px;top:882px;width:1px;height:3px;background:#a3a3a3;"></div>
<div class="r" style="left:80px;top:605px;width:6px;height:1px;background:#a3a3a3;"></div>
<span class="t" style="left:60.12px;top:597.94px;font-size:12px;line-height:16px;color:#141414;">0.6</span>
<div class="r" style="left:80px;top:665px;width:6px;height:1px;background:#a3a3a3;"></div>
<span class="t" style="left:60.12px;top:657.94px;font-size:12px;line-height:16px;color:#141414;">0.4</span>
<div class="r" style="left:80px;top:726px;width:6px;height:1px;background:#a3a3a3;"></div>
<span class="t" style="left:60.12px;top:718.94px;font-size:12px;line-height:16px;color:#141414;">0.2</span>
<div class="r" style="left:80px;top:786px;width:6px;height:1px;background:#a3a3a3;"></div>
<span class="t" style="left:70.13px;top:778.94px;font-size:12px;line-height:16px;color:#141414;">0</span>
<div class="r" style="left:80px;top:847px;width:6px;height:1px;background:#a3a3a3;"></div>
<span class="t" style="left:56.12px;top:839.94px;font-size:12px;line-height:16px;color:#141414;">-0.2</span>
<span class="t" style="left:217.55px;top:905.04px;font-size:12px;line-height:16px;color:#141414;letter-spacing:-0.215px;">Distance between Marker Pairs</span>
<span class="t" style="left:48.0px;top:789.8px;font-size:12px;line-height:15px;transform-origin:0 0;transform:rotate(-90deg) translateY(-11.66px);letter-spacing:0.001px;color:#1a1a1a">LD Correlation Coefficient</span>
<svg class="r" style="left:86px;top:561px" width="427" height="321" viewBox="86 561 427 321"><g fill="#000"><circle cx="162.4" cy="572.9" r="2.7"/><circle cx="120.9" cy="590.0" r="2.7"/><circle cx="182.5" cy="590.2" r="2.7"/><circle cx="162.8" cy="601.0" r="2.7"/><circle cx="298.9" cy="597.4" r="2.7"/><circle cx="151.5" cy="658.2" r="2.7"/><circle cx="213.5" cy="658.8" r="2.7"/><circle cx="319.4" cy="589.1" r="2.7"/><circle cx="381.1" cy="591.7" r="2.7"/><circle cx="370.2" cy="644.8" r="2.7"/><circle cx="432.1" cy="648.4" r="2.7"/><circle cx="431.8" cy="657.2" r="2.7"/><circle cx="412.1" cy="662.9" r="2.7"/><circle cx="350.3" cy="667.8" r="2.7"/><circle cx="493.6" cy="655.3" r="2.7"/><circle cx="101.5" cy="794.2" r="2.7"/><circle cx="109.2" cy="788.3" r="2.7"/><circle cx="110.2" cy="776.5" r="2.7"/><circle cx="111.8" cy="781.8" r="2.7"/><circle cx="153.7" cy="785.1" r="2.7"/><circle cx="161.9" cy="779.0" r="2.7"/><circle cx="167.4" cy="781.5" r="2.7"/><circle cx="173.4" cy="781.8" r="2.7"/><circle cx="175.8" cy="792.7" r="2.7"/><circle cx="204.2" cy="796.9" r="2.7"/><circle cx="212.7" cy="786.2" r="2.7"/><circle cx="114.6" cy="840.9" r="2.7"/><circle cx="138.0" cy="851.9" r="2.7"/><circle cx="176.4" cy="838.7" r="2.7"/><circle cx="308.7" cy="795.2" r="2.7"/><circle cx="345.8" cy="774.6" r="2.7"/><circle cx="359.4" cy="784.2" r="2.7"/><circle cx="412.2" cy="772.1" r="2.7"/><circle cx="411.1" cy="786.2" r="2.7"/><circle cx="402.9" cy="790.6" r="2.7"/><circle cx="421.3" cy="785.9" r="2.7"/><circle cx="420.5" cy="790.5" r="2.7"/><circle cx="423.2" cy="790.0" r="2.7"/><circle cx="431.2" cy="782.0" r="2.7"/><circle cx="492.9" cy="774.6" r="2.7"/><circle cx="484.6" cy="795.4" r="2.7"/><circle cx="336.6" cy="857.0" r="2.7"/><circle cx="356.5" cy="869.3" r="2.7"/><circle cx="418.2" cy="857.5" r="2.7"/></g><path d="M249 804V815H247.8L246.5 812.5L245.8 813L245.5 815L244.8 816.2L244.6 817L243.8 817.5V818.8H242V817.2L243 817L243.2 814.8L244 814.5L244.3 810.8H241V810L247.3 804Z" fill="#000"/></svg>
<div class="r" style="left:1555px;top:932px;width:1px;height:20px;background:#8f93a8;"></div>
<svg class="r" style="left:1555px;top:931px" width="40" height="22" viewBox="1555 931 40 22"><path d="M1563 941.5v5.2h8v-5.2" fill="#f4f9fe" stroke="#8cc6ee" stroke-width="0.9"/><path d="M1561.3 942l5.7-5.4l5.7 5.4" fill="none" stroke="#2b8ad0" stroke-width="1.7" stroke-linejoin="miter"/><rect x="1565.6" y="942.3" width="2.6" height="4.3" fill="#9a5a12"/><rect x="1566.3" y="944" width="0.8" height="0.9" fill="#f0d080"/><rect x="1577.5" y="936.3" width="10.3" height="9.6" fill="#ffffff" stroke="#1556a8" stroke-width="1.1"/><path d="M1578 938.2h9.5M1578 940.2h9.5" stroke="#f07070" stroke-width="0.8"/><path d="M1578 942.3h9.5M1578 944.2h9.5M1581 936.8v9M1583.5 936.8v9M1585.8 936.8v9" stroke="#9dbfe8" stroke-width="0.6"/><ellipse cx="1584" cy="940.6" rx="1.1" ry="0.8" fill="#000"/><path d="M1585.6 940.5999999999999L1586.3039999999999 943.096L1588.8 943.8L1586.3039999999999 944.5039999999999L1585.6 947.0L1584.896 944.5039999999999L1582.3999999999999 943.8L1584.896 943.096Z" fill="#2a80cc"/></svg>
<div class="r" style="left:1601px;top:935px;width:14px;height:13px;background:#ffffff;border:1px solid #6f6f6f;box-sizing:border-box;"></div>
<svg class="r" style="left:1620px;top:937px" width="10" height="8" viewBox="0 0 10 8"><path d="M0.8 1h8.4l-4.2 6z" fill="#000"/></svg>
<svg class="r" style="left:1641px;top:940px" width="12" height="12" viewBox="0 0 12 12"><g fill="#f7f9fd"><rect x="9" y="0" width="1.4" height="1.4"/><rect x="6" y="3" width="1.4" height="1.4"/><rect x="9" y="3" width="1.4" height="1.4"/><rect x="3" y="6" width="1.4" height="1.4"/><rect x="6" y="6" width="1.4" height="1.4"/><rect x="9" y="6" width="1.4" height="1.4"/><rect x="0" y="9" width="1.4" height="1.4"/><rect x="3" y="9" width="1.4" height="1.4"/><rect x="6" y="9" width="1.4" height="1.4"/><rect x="9" y="9" width="1.4" height="1.4"/></g></svg>
</div></body></html>
